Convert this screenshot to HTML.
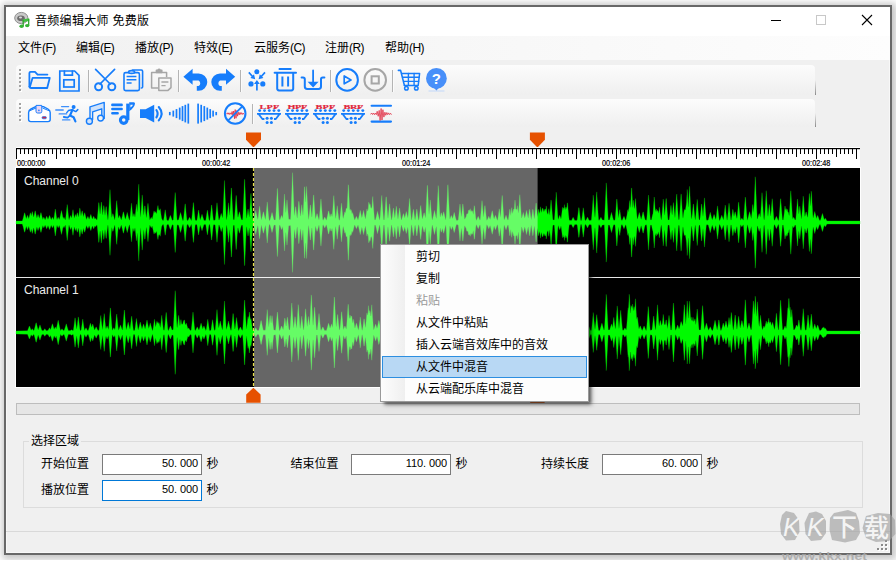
<!DOCTYPE html>
<html lang="zh-CN"><head><meta charset="utf-8"><title>音频编辑大师 免费版</title>
<style>
html,body{margin:0;padding:0}
body{width:896px;height:563px;background:#fff;position:relative;overflow:hidden;font-family:"Liberation Sans","Noto Sans CJK SC",sans-serif;font-size:12px;color:#000}
.abs{position:absolute}
#win{left:4px;top:5px;width:888px;height:550px;box-sizing:border-box;border:2px solid #686868;background:#f0f0f0;box-shadow:2px 2px 7px 3px rgba(0,0,0,.15),0 0 7px 3px rgba(0,0,0,.09),inset 0 0 0 1px #f8f8f8}
#title{left:6px;top:7px;width:884px;height:29px;background:#fff}
#ttext{left:35px;top:12px;line-height:18px;font-size:12px;white-space:nowrap;letter-spacing:.3px}
#menubar{left:6px;top:36px;width:884px;height:24px;background:linear-gradient(90deg,#f1f1f1,#fdfdfd)}
.mi{top:39px;line-height:19px;white-space:nowrap}
.mi span{letter-spacing:-0.6px}
.tb{left:16px;width:799px;border-radius:4px;background:linear-gradient(#fcfcfc,#efefef)}
.cjk{font-family:"Liberation Sans","Noto Sans CJK SC",sans-serif}
.song{font-family:"Liberation Sans","Noto Sans CJK SC",sans-serif;font-weight:400}
#menu{left:380px;top:244px;width:209px;height:158px;box-sizing:border-box;border:1px solid #9a9a9a;background:#fdfdfd;box-shadow:3px 3px 3px -1px rgba(0,0,0,.5),4px 4px 5px -1px rgba(0,0,0,.25)}
#menu .gut{left:0;top:0;width:24px;height:156px;background:linear-gradient(90deg,#fdfdfd,#efefef)}
#menu .it{left:35px;line-height:22px;height:22px;white-space:nowrap}
#menu .hl{left:1px;top:111px;width:205px;height:22px;box-sizing:border-box;background:#b8d8f4;border:1px solid #2c8ee0}
.lbl{line-height:14px;white-space:nowrap}
.inp{width:100px;height:21px;box-sizing:border-box;border:1px solid #7a7a7a;background:#fff}
.inp span{position:absolute;right:3px;top:1px;line-height:14px;font-family:"Liberation Sans",sans-serif;font-size:11px;letter-spacing:-0.1px}
.inp i{display:inline-block;width:3px}
</style></head><body>
<div id="win" class="abs"></div>
<div class="abs" style="left:0;top:560px;width:896px;height:3px;background:#fff"></div>
<div id="title" class="abs"></div>
<div id="ttext" class="abs">音频编辑大师 免费版</div>
<div id="menubar" class="abs"></div>
<div class="abs mi" style="left:18px">文件<span>(F)</span></div>
<div class="abs mi" style="left:76px">编辑<span>(E)</span></div>
<div class="abs mi" style="left:135px">播放<span>(P)</span></div>
<div class="abs mi" style="left:194px">特效<span>(E)</span></div>
<div class="abs mi" style="left:254px">云服务<span>(C)</span></div>
<div class="abs mi" style="left:325px">注册<span>(R)</span></div>
<div class="abs mi" style="left:385px">帮助<span>(H)</span></div>
<div class="abs tb" style="top:65px;height:30px"></div>
<div class="abs tb" style="top:99px;height:28px"></div>
<div class="abs" style="left:815px;top:80px;width:1px;height:15px;background:linear-gradient(rgba(120,120,120,0),#8a8a8a)"></div>
<div class="abs" style="left:815px;top:113px;width:1px;height:14px;background:linear-gradient(rgba(120,120,120,0),#8a8a8a)"></div>
<svg class="abs" style="left:0;top:0" width="896" height="563" viewBox="0 0 896 563">
<g>
<ellipse cx="21.3" cy="18" rx="6.6" ry="5.6" fill="#c9c9c9" stroke="#8f8f8f" stroke-width="1"/>
<ellipse cx="21" cy="18.2" rx="3.8" ry="2.8" fill="#6c6c6c"/>
<ellipse cx="20.5" cy="17.5" rx="1.6" ry="1.1" fill="#d8d8d8"/>
<path d="M22.6 19.6 L29.2 18.3 L29.2 21 L22.6 22.3 Z" fill="#3fbf3f"/>
<path d="M23.2 20 V26 M28.7 19 V25.2" stroke="#2fa52f" stroke-width="1.3" fill="none"/>
<ellipse cx="21.6" cy="26.2" rx="2.2" ry="1.7" fill="#35b335"/>
<ellipse cx="27.2" cy="25.6" rx="2.2" ry="1.7" fill="#35b335"/>
</g>
<path d="M771 20.5 H781" stroke="#000" stroke-width="1"/>
<rect x="816.5" y="15.5" width="9" height="9" fill="none" stroke="#c8c8c8" stroke-width="1"/>
<path d="M862 15 L872 25 M872 15 L862 25" stroke="#000" stroke-width="1.1" fill="none"/>
<rect x="20" y="70" width="2" height="2" fill="#fff"/><rect x="19" y="69" width="2" height="2" fill="#a3a3a3"/><rect x="20" y="74" width="2" height="2" fill="#fff"/><rect x="19" y="73" width="2" height="2" fill="#a3a3a3"/><rect x="20" y="78" width="2" height="2" fill="#fff"/><rect x="19" y="77" width="2" height="2" fill="#a3a3a3"/><rect x="20" y="82" width="2" height="2" fill="#fff"/><rect x="19" y="81" width="2" height="2" fill="#a3a3a3"/><rect x="20" y="86" width="2" height="2" fill="#fff"/><rect x="19" y="85" width="2" height="2" fill="#a3a3a3"/><rect x="20" y="90" width="2" height="2" fill="#fff"/><rect x="19" y="89" width="2" height="2" fill="#a3a3a3"/>
<rect x="20" y="104" width="2" height="2" fill="#fff"/><rect x="19" y="103" width="2" height="2" fill="#a3a3a3"/><rect x="20" y="108" width="2" height="2" fill="#fff"/><rect x="19" y="107" width="2" height="2" fill="#a3a3a3"/><rect x="20" y="112" width="2" height="2" fill="#fff"/><rect x="19" y="111" width="2" height="2" fill="#a3a3a3"/><rect x="20" y="116" width="2" height="2" fill="#fff"/><rect x="19" y="115" width="2" height="2" fill="#a3a3a3"/><rect x="20" y="120" width="2" height="2" fill="#fff"/><rect x="19" y="119" width="2" height="2" fill="#a3a3a3"/>
<rect x="88" y="70" width="1" height="22" fill="#b4b4b4"/><rect x="89" y="70" width="1" height="22" fill="#fbfbfb"/>
<rect x="178" y="70" width="1" height="22" fill="#b4b4b4"/><rect x="179" y="70" width="1" height="22" fill="#fbfbfb"/>
<rect x="240" y="70" width="1" height="22" fill="#b4b4b4"/><rect x="241" y="70" width="1" height="22" fill="#fbfbfb"/>
<rect x="330" y="70" width="1" height="22" fill="#b4b4b4"/><rect x="331" y="70" width="1" height="22" fill="#fbfbfb"/>
<rect x="392" y="70" width="1" height="22" fill="#b4b4b4"/><rect x="393" y="70" width="1" height="22" fill="#fbfbfb"/>
<rect x="252" y="104" width="1" height="20" fill="#b4b4b4"/><rect x="253" y="104" width="1" height="20" fill="#fbfbfb"/>
<g fill="none" stroke="#167dfb" stroke-width="1.6" stroke-linejoin="round" stroke-linecap="round">
<!-- open folder -->
<path d="M29.4 86.6 V73 Q29.4 71.8 30.6 71.8 H35 L37.6 74.6 H47.4" stroke-width="1.8"/>
<path d="M29.4 86.6 Q29.4 88 30.8 88 H47.2 L49.8 77.8 H32.6 L29.8 87.2" stroke-width="1.8"/>
<!-- save -->
<path d="M59.8 71 H74.6 L79 75.4 V91 H59.8 Z" stroke-width="1.7" stroke-linejoin="miter"/>
<path d="M64.4 71 V75.2 H72.4 V71" stroke-width="1.7" stroke-linejoin="miter"/>
<rect x="63.8" y="79.8" width="10.4" height="7.2" stroke-width="1.7" stroke-linejoin="miter"/>
<!-- scissors -->
<path d="M95.6 69.4 L110.2 84 M114.6 69.4 L100 84" stroke-width="1.7"/>
<circle cx="98.6" cy="86.8" r="3.5" stroke-width="2"/>
<circle cx="111.8" cy="86.8" r="3.5" stroke-width="2"/>
<!-- copy -->
<rect x="124" y="72.6" width="15.4" height="18" rx="1.6"/>
<path d="M132.5 70 H141.4 Q142.6 70 142.6 71.2 V87 Q142.6 88 141.4 88" />
<ellipse cx="131.6" cy="72" rx="3" ry="1.4" fill="#f6f6f6"/>
<path d="M126.6 76.6 H136.4 M126.6 79.8 H136.4 M126.6 82.9 H131.6" stroke-width="1.5" stroke-linecap="butt"/>
</g>
<g fill="none" stroke="#a6a6a6" stroke-width="1.5" stroke-linejoin="round">
<!-- paste (disabled) -->
<path d="M158 88 H151.6 V72.6 H166.6 V77"/>
<path d="M156.4 72.4 V70.2 H157.8 Q159 68.2 160.4 70.2 H161.8 V72.4 Z" fill="#a6a6a6"/>
<path d="M158.8 78 H171 V87.6 L168 90.4 H158.8 Z"/>
<path d="M161.4 82 H168.4 M161.4 85.6 H165.6" stroke-width="1.4"/>
<!-- stop -->
<circle cx="375.2" cy="79.9" r="10.8" stroke-width="2"/>
<rect x="371.6" y="76.3" width="7.2" height="7.2" stroke-width="2" stroke-linejoin="miter"/>
</g>
<!-- undo / redo -->
<g id="undo" fill="#167dfb" stroke="none">
<path d="M183.4 76.8 L192.6 68.8 V73.4 H198.6 A8.7 8.7 0 0 1 198.6 90.8 H196.8 V86 H198.6 A3.2 3.2 0 0 0 198.6 80.4 H192.6 V84.8 Z"/>
</g>
<g fill="#167dfb" stroke="none" transform="translate(418.6 0) scale(-1 1)">
<path d="M183.4 76.8 L192.6 68.8 V73.4 H198.6 A8.7 8.7 0 0 1 198.6 90.8 H196.8 V86 H198.6 A3.2 3.2 0 0 0 198.6 80.4 H192.6 V84.8 Z"/>
</g>
<!-- merge -->
<g fill="#167dfb" stroke="#167dfb">
<circle cx="256.8" cy="71.8" r="2.5" stroke="none"/>
<circle cx="251" cy="83.9" r="2.6" stroke="none"/>
<circle cx="262.8" cy="83.9" r="2.6" stroke="none"/>
<path d="M248.8 72.4 L253.2 77.2 M265 72.4 L260.6 77.2 M256.9 90.4 V83" stroke-width="1.7" fill="none"/>
<path d="M255.2 79.2 L250.4 78 L254 74.2 Z M258.6 79.2 L263.4 78 L259.8 74.2 Z M256.9 80 L254 84 H259.8 Z" stroke="none"/>
</g>
<!-- trash -->
<g fill="none" stroke="#167dfb" stroke-width="2" stroke-linecap="round" stroke-linejoin="round">
<path d="M279.4 69 H290.8" stroke-width="1.8"/>
<path d="M274.6 72.8 H296"/>
<path d="M277.2 73 V88.6 Q277.2 90.4 279 90.4 H291.4 Q293.2 90.4 293.2 88.6 V73"/>
<path d="M282.4 76.6 V86.6 M288.1 76.6 V86.6" stroke-linecap="butt"/>
<!-- insert -->
<path d="M313.1 70.4 V85" stroke-width="1.8"/>
<path d="M301.6 77.5 H303 Q304.8 77.5 304.8 79.3 V86.6 Q304.8 89 307.2 89 H318.6 Q321 89 321 86.6 V79.3 Q321 77.5 322.8 77.5 H324.4"/>
</g>
<path d="M307.6 81.8 H318.6 L313.1 87.6 Z" fill="#167dfb"/>
<!-- play -->
<g fill="none" stroke="#167dfb" stroke-linejoin="round">
<circle cx="347.1" cy="79.9" r="10.8" stroke-width="2"/>
<path d="M344.2 76 V83.8 L351 79.9 Z" stroke-width="1.7"/>
</g>
<!-- cart -->
<g fill="none" stroke="#167dfb" stroke-width="1.5" stroke-linejoin="round" stroke-linecap="round">
<path d="M398.4 70.4 H400.6 L404.4 85.4" stroke-width="1.6"/>
<path d="M401.6 73.5 H419.6 L418.2 85.4 H404.4"/>
<path d="M402.6 77.2 H419.1 M403.6 81.4 H418.6 M408.4 73.5 V85.4 M414.1 73.5 V85.4" stroke-width="1.4"/>
<circle cx="406.4" cy="88.3" r="1.8"/>
<circle cx="416.3" cy="88.3" r="1.8"/>
</g>
<!-- help -->
<path d="M428.5 91 H444.5" stroke="#c9dcf8" stroke-width="1.2"/>
<circle cx="436.4" cy="78.4" r="10.4" fill="#478ff9"/>
<path d="M434 88 L436.4 90.6 L438.8 88 Z" fill="#478ff9"/>
<text x="436.4" y="83.6" text-anchor="middle" font-family="Liberation Sans, sans-serif" font-weight="bold" font-size="15" fill="#fff">?</text>
<!-- toolbar 2 -->
<g fill="#fff" stroke="#167dfb" stroke-width="1.4" stroke-linejoin="round">
<path d="M28.6 112.4 Q28.6 110.2 31 109 L35.6 106.6 H43.4 L48 109 Q50.2 110.2 50.2 112.4 V119.6 Q50.2 121.6 48 121.6 H30.8 Q28.6 121.6 28.6 119.6 Z"/>
<path d="M29.2 111 L36 108 M49.6 111 L42.6 108" stroke-width="1"/>
<path d="M36 105.4 H41.8 V111.4 Q41.8 113 40.2 113 H37.6 Q36 113 36 111.4 Z" fill="#ecd6f2" stroke-width="1"/>
<circle cx="38.9" cy="110.4" r="0.8" fill="#167dfb" stroke="none"/>
<rect x="42" y="116.6" width="4.4" height="2.2" rx="1.1" fill="#d8203c" stroke-width="0.7"/>
</g>
<!-- runner -->
<g fill="none" stroke="#167dfb" stroke-width="1.2" stroke-linecap="round" stroke-linejoin="round">
<path d="M61.6 106.6 H68.6 M55.8 110 H63.2 M59.2 113.9 H66.6 M62.6 119.9 H69.8" stroke="#3f90fb" stroke-width="1.4"/>
<path d="M66.8 112.6 L68.4 110.6 L72 109.8 L75.8 111.6 L77.8 109.6" stroke-width="1.5"/>
<path d="M72.4 109.8 L70 115.6 L73.6 117.2 L75.4 121.4" stroke-width="2.2"/>
<path d="M70 115.4 L67.6 117.6 L63.8 117" stroke-width="1.8"/>
</g>
<circle cx="73.6" cy="107" r="2" fill="#167dfb"/>
<!-- notes -->
<g fill="none" stroke="#167dfb" stroke-width="1.4" stroke-linejoin="round" stroke-linecap="round">
<path d="M90.7 107.2 L103.6 103.2 V108.2 L90.7 112.4 Z" fill="#cfe2fb" stroke="none"/>
<path d="M90 118.4 V106.8 L104.2 102.4 V118.6"/>
<path d="M92.6 119.4 V111.9 L101.8 108.8 V115.4"/>
<circle cx="89.4" cy="121.3" r="3" fill="#cfe2fb"/>
<circle cx="100.6" cy="118.1" r="2.9" fill="#f3f3f3"/>
</g>
<!-- playlist note -->
<g fill="none" stroke="#167dfb" stroke-linecap="round">
<path d="M112.4 104.9 H121.6 M112.4 109 H121.6 M112.4 113.2 H117.6" stroke-width="2.6"/>
<path d="M127.8 103.6 V120" stroke-width="3.2" stroke-linecap="butt"/>
<circle cx="123.7" cy="120.1" r="3.3" stroke-width="3.1"/>
</g>
<path d="M126.2 102.2 H133.8 Q135.2 102.2 135 103.8 Q134.4 107.8 129.2 111.2 V102.2 Z M130.4 104.8 V107.6 Q132.4 106.6 133 104.8 Z" fill="#167dfb" fill-rule="evenodd"/>
<!-- speaker -->
<path d="M140 109.2 H145.6 L154.2 104.8 V122.4 L145.6 118 H140 Z" fill="#167dfb"/>
<g fill="none" stroke="#167dfb" stroke-width="2.1" stroke-linecap="round">
<path d="M156.4 110 Q158.8 113.6 156.4 117.4"/>
<path d="M158.8 107 Q164.4 113.6 158.8 120.4"/>
</g>
<rect x="168.95" y="111.95" width="1.7" height="3.3" fill="#167dfb"/><rect x="172.45" y="110.60" width="1.7" height="6" fill="#167dfb"/><rect x="175.65" y="109.10" width="1.7" height="9" fill="#167dfb"/><rect x="178.85" y="107.60" width="1.7" height="12" fill="#167dfb"/><rect x="181.65" y="106.10" width="1.7" height="15" fill="#167dfb"/><rect x="184.45" y="104.80" width="1.7" height="17.6" fill="#167dfb"/><rect x="187.45" y="103.60" width="1.7" height="20" fill="#167dfb"/><rect x="197.25" y="103.60" width="1.7" height="20" fill="#167dfb"/><rect x="200.35" y="104.80" width="1.7" height="17.6" fill="#167dfb"/><rect x="203.45" y="106.10" width="1.7" height="15" fill="#167dfb"/><rect x="206.45" y="107.60" width="1.7" height="12" fill="#167dfb"/><rect x="209.35" y="109.10" width="1.7" height="9" fill="#167dfb"/><rect x="212.25" y="110.60" width="1.7" height="6" fill="#167dfb"/><rect x="215.35" y="111.95" width="1.7" height="3.3" fill="#167dfb"/>
<!-- no-noise -->
<polyline points="226.5,114.2 227.3,112.8 228.1,114.3 228.9,112.8 229.7,114.5 230.5,112.9 231.3,114.4 232.1,111.5 232.9,115.6 233.7,111.0 234.5,118.7 235.2,109.6 236.0,118.3 236.8,110.5 237.6,116.2 238.4,112.3 239.2,114.9 240.0,112.4 240.8,114.4 241.6,112.7 242.4,114.4 243.2,113.1 244.0,114.5" fill="none" stroke="#e0263c" stroke-width="0.8" stroke-linejoin="round"/>
<circle cx="235.2" cy="113.5" r="10.3" fill="none" stroke="#167dfb" stroke-width="2"/>
<path d="M227.8 120.8 L242.6 106.2" stroke="#167dfb" stroke-width="1.8"/>
<g fill="#167dfb" stroke="none"><circle cx="259.7" cy="110.6" r="1.45"/><circle cx="264.5" cy="110.6" r="1.45"/><circle cx="269.3" cy="110.6" r="1.45"/><circle cx="274.0" cy="110.6" r="1.45"/><circle cx="278.8" cy="110.6" r="1.45"/><circle cx="267.1" cy="118.2" r="1.5"/><circle cx="267.1" cy="122.4" r="1.5"/><circle cx="271.4" cy="118.2" r="1.5"/><circle cx="271.4" cy="122.4" r="1.5"/></g><path d="M257 113.8 H281 M258.6 114 L262.4 119 H264.4 M279.6 114 L275.8 119 H274" fill="none" stroke="#167dfb" stroke-width="1.8" stroke-linejoin="round"/><text transform="translate(259.5 108.7) scale(0.513 0.34)" x="0" y="0" font-family="Liberation Serif, serif" font-weight="bold" font-size="20" textLength="38.5" lengthAdjust="spacing" fill="#e0263c" stroke="#e0263c" stroke-width="0.5">LPF</text>
<g fill="#167dfb" stroke="none"><circle cx="287.7" cy="110.6" r="1.45"/><circle cx="292.5" cy="110.6" r="1.45"/><circle cx="297.3" cy="110.6" r="1.45"/><circle cx="302.0" cy="110.6" r="1.45"/><circle cx="306.8" cy="110.6" r="1.45"/><circle cx="295.1" cy="118.2" r="1.5"/><circle cx="295.1" cy="122.4" r="1.5"/><circle cx="299.4" cy="118.2" r="1.5"/><circle cx="299.4" cy="122.4" r="1.5"/></g><path d="M285 113.8 H309 M286.6 114 L290.4 119 H292.4 M307.6 114 L303.8 119 H302" fill="none" stroke="#167dfb" stroke-width="1.8" stroke-linejoin="round"/><text transform="translate(287.5 108.7) scale(0.513 0.34)" x="0" y="0" font-family="Liberation Serif, serif" font-weight="bold" font-size="20" textLength="38.5" lengthAdjust="spacing" fill="#e0263c" stroke="#e0263c" stroke-width="0.5">HPF</text>
<g fill="#167dfb" stroke="none"><circle cx="315.7" cy="110.6" r="1.45"/><circle cx="320.5" cy="110.6" r="1.45"/><circle cx="325.3" cy="110.6" r="1.45"/><circle cx="330.0" cy="110.6" r="1.45"/><circle cx="334.8" cy="110.6" r="1.45"/><circle cx="323.1" cy="118.2" r="1.5"/><circle cx="323.1" cy="122.4" r="1.5"/><circle cx="327.4" cy="118.2" r="1.5"/><circle cx="327.4" cy="122.4" r="1.5"/></g><path d="M313 113.8 H337 M314.6 114 L318.4 119 H320.4 M335.6 114 L331.8 119 H330" fill="none" stroke="#167dfb" stroke-width="1.8" stroke-linejoin="round"/><text transform="translate(315.5 108.7) scale(0.513 0.34)" x="0" y="0" font-family="Liberation Serif, serif" font-weight="bold" font-size="20" textLength="38.5" lengthAdjust="spacing" fill="#e0263c" stroke="#e0263c" stroke-width="0.5">BPF</text>
<g fill="#167dfb" stroke="none"><circle cx="343.7" cy="110.6" r="1.45"/><circle cx="348.5" cy="110.6" r="1.45"/><circle cx="353.3" cy="110.6" r="1.45"/><circle cx="358.0" cy="110.6" r="1.45"/><circle cx="362.8" cy="110.6" r="1.45"/><circle cx="351.1" cy="118.2" r="1.5"/><circle cx="351.1" cy="122.4" r="1.5"/><circle cx="355.4" cy="118.2" r="1.5"/><circle cx="355.4" cy="122.4" r="1.5"/></g><path d="M341 113.8 H365 M342.6 114 L346.4 119 H348.4 M363.6 114 L359.8 119 H358" fill="none" stroke="#167dfb" stroke-width="1.8" stroke-linejoin="round"/><text transform="translate(343.5 108.7) scale(0.513 0.34)" x="0" y="0" font-family="Liberation Serif, serif" font-weight="bold" font-size="20" textLength="38.5" lengthAdjust="spacing" fill="#e0263c" stroke="#e0263c" stroke-width="0.5">BRF</text>
<path d="M371.6 105.7 H391 M371.6 121.6 H391" stroke="#167dfb" stroke-width="2.1" stroke-linecap="round"/>
<g opacity="0.85"><polyline points="370.6,114.4 371.6,113.0 372.5,114.5 373.5,113.0 374.4,114.7 375.4,113.1 376.3,114.7 377.2,111.3 378.2,116.3 379.2,110.4 380.1,120.5 381.1,108.5 382.0,120.0 382.9,109.7 383.9,117.1 384.9,112.2 385.8,115.3 386.8,112.5 387.7,114.7 388.6,112.9 389.6,114.6 390.6,113.3 391.5,114.7" fill="none" stroke="#e0263c" stroke-width="0.9" stroke-linejoin="round"/></g>
<path d="M246.0 132.6 H261.0 V139.8 L253.5 147.4 L246.0 139.8 Z" fill="#e65100"/>
<path d="M529.9 132.6 H544.9 V139.8 L537.4 147.4 L529.9 139.8 Z" fill="#e65100"/>
<path d="M253.4 387.8 L260.6 394.6 V402.8 H246.2 V394.6 Z" fill="#e65100"/>
<path d="M537.4 387.8 L544.6 394.6 V402.8 H530.2 V394.6 Z" fill="#e65100"/>
<rect x="16" y="147" width="844" height="21" fill="#fff"/>
<rect x="16" y="148" width="844" height="1.2" fill="#000"/>
<path d="M16.5 148 v11 M20.5 148 v6 M24.5 148 v6 M28.5 148 v6 M32.5 148 v6 M36.5 148 v9 M40.5 148 v6 M44.5 148 v6 M48.5 148 v6 M52.5 148 v6 M56.5 148 v11 M60.5 148 v6 M64.5 148 v6 M68.5 148 v6 M72.5 148 v6 M76.5 148 v9 M80.5 148 v6 M84.5 148 v6 M88.5 148 v6 M92.5 148 v6 M96.5 148 v11 M100.5 148 v6 M104.5 148 v6 M108.5 148 v6 M112.5 148 v6 M116.5 148 v9 M120.5 148 v6 M124.5 148 v6 M128.5 148 v6 M132.5 148 v6 M136.5 148 v11 M140.5 148 v6 M144.5 148 v6 M148.5 148 v6 M152.5 148 v6 M156.5 148 v9 M160.5 148 v6 M164.5 148 v6 M168.5 148 v6 M172.5 148 v6 M176.5 148 v11 M180.5 148 v6 M184.5 148 v6 M188.5 148 v6 M192.5 148 v6 M196.5 148 v9 M200.5 148 v6 M204.5 148 v6 M208.5 148 v6 M212.5 148 v6 M216.5 148 v11 M220.5 148 v6 M224.5 148 v6 M228.5 148 v6 M232.5 148 v6 M236.5 148 v9 M240.5 148 v6 M244.5 148 v6 M248.5 148 v6 M252.5 148 v6 M256.5 148 v11 M260.5 148 v6 M264.5 148 v6 M268.5 148 v6 M272.5 148 v6 M276.5 148 v9 M280.5 148 v6 M284.5 148 v6 M288.5 148 v6 M292.5 148 v6 M296.5 148 v11 M300.5 148 v6 M304.5 148 v6 M308.5 148 v6 M312.5 148 v6 M316.5 148 v9 M320.5 148 v6 M324.5 148 v6 M328.5 148 v6 M332.5 148 v6 M336.5 148 v11 M340.5 148 v6 M344.5 148 v6 M348.5 148 v6 M352.5 148 v6 M356.5 148 v9 M360.5 148 v6 M364.5 148 v6 M368.5 148 v6 M372.5 148 v6 M376.5 148 v11 M380.5 148 v6 M384.5 148 v6 M388.5 148 v6 M392.5 148 v6 M396.5 148 v9 M400.5 148 v6 M404.5 148 v6 M408.5 148 v6 M412.5 148 v6 M416.5 148 v11 M420.5 148 v6 M424.5 148 v6 M428.5 148 v6 M432.5 148 v6 M436.5 148 v9 M440.5 148 v6 M444.5 148 v6 M448.5 148 v6 M452.5 148 v6 M456.5 148 v11 M460.5 148 v6 M464.5 148 v6 M468.5 148 v6 M472.5 148 v6 M476.5 148 v9 M480.5 148 v6 M484.5 148 v6 M488.5 148 v6 M492.5 148 v6 M496.5 148 v11 M500.5 148 v6 M504.5 148 v6 M508.5 148 v6 M512.5 148 v6 M516.5 148 v9 M520.5 148 v6 M524.5 148 v6 M528.5 148 v6 M532.5 148 v6 M536.5 148 v11 M540.5 148 v6 M544.5 148 v6 M548.5 148 v6 M552.5 148 v6 M556.5 148 v9 M560.5 148 v6 M564.5 148 v6 M568.5 148 v6 M572.5 148 v6 M576.5 148 v11 M580.5 148 v6 M584.5 148 v6 M588.5 148 v6 M592.5 148 v6 M596.5 148 v9 M600.5 148 v6 M604.5 148 v6 M608.5 148 v6 M612.5 148 v6 M616.5 148 v11 M620.5 148 v6 M624.5 148 v6 M628.5 148 v6 M632.5 148 v6 M636.5 148 v9 M640.5 148 v6 M644.5 148 v6 M648.5 148 v6 M652.5 148 v6 M656.5 148 v11 M660.5 148 v6 M664.5 148 v6 M668.5 148 v6 M672.5 148 v6 M676.5 148 v9 M680.5 148 v6 M684.5 148 v6 M688.5 148 v6 M692.5 148 v6 M696.5 148 v11 M700.5 148 v6 M704.5 148 v6 M708.5 148 v6 M712.5 148 v6 M716.5 148 v9 M720.5 148 v6 M724.5 148 v6 M728.5 148 v6 M732.5 148 v6 M736.5 148 v11 M740.5 148 v6 M744.5 148 v6 M748.5 148 v6 M752.5 148 v6 M756.5 148 v9 M760.5 148 v6 M764.5 148 v6 M768.5 148 v6 M772.5 148 v6 M776.5 148 v11 M780.5 148 v6 M784.5 148 v6 M788.5 148 v6 M792.5 148 v6 M796.5 148 v9 M800.5 148 v6 M804.5 148 v6 M808.5 148 v6 M812.5 148 v6 M816.5 148 v11 M820.5 148 v6 M824.5 148 v6 M828.5 148 v6 M832.5 148 v6 M836.5 148 v9 M840.5 148 v6 M844.5 148 v6 M848.5 148 v6 M852.5 148 v6 M856.5 148 v11 " stroke="#000" stroke-width="1" fill="none"/>
<text x="17" y="166.4" text-anchor="start" font-family="Liberation Sans, sans-serif" font-size="9" textLength="28.4" lengthAdjust="spacingAndGlyphs" fill="#000" stroke="#000" stroke-width="0.2">00:00:00</text>
<text x="216.2" y="166.4" text-anchor="middle" font-family="Liberation Sans, sans-serif" font-size="9" textLength="28.4" lengthAdjust="spacingAndGlyphs" fill="#000" stroke="#000" stroke-width="0.2">00:00:42</text>
<text x="416.2" y="166.4" text-anchor="middle" font-family="Liberation Sans, sans-serif" font-size="9" textLength="28.4" lengthAdjust="spacingAndGlyphs" fill="#000" stroke="#000" stroke-width="0.2">00:01:24</text>
<text x="616.2" y="166.4" text-anchor="middle" font-family="Liberation Sans, sans-serif" font-size="9" textLength="28.4" lengthAdjust="spacingAndGlyphs" fill="#000" stroke="#000" stroke-width="0.2">00:02:06</text>
<text x="816.2" y="166.4" text-anchor="middle" font-family="Liberation Sans, sans-serif" font-size="9" textLength="28.4" lengthAdjust="spacingAndGlyphs" fill="#000" stroke="#000" stroke-width="0.2">00:02:48</text>
<rect x="15" y="167" width="846" height="221" fill="#fff"/>
<rect x="16" y="168" width="844" height="219" fill="#000"/>
<g fill="#00fb00" stroke="#00c800" stroke-width="0.5" stroke-opacity="0.6">
<polygon points="16.00,221.0 22.25,221.0 23.00,218.7 24.25,213.9 24.50,212.9 24.75,212.8 26.00,217.8 26.25,218.7 26.75,217.5 27.50,215.2 28.75,218.7 30.00,213.9 30.25,212.9 30.50,212.8 31.25,215.9 31.75,213.9 32.25,211.6 32.50,212.3 33.50,216.7 33.75,217.2 34.75,212.6 35.00,211.3 35.25,210.8 36.50,216.7 36.75,217.8 37.00,217.7 38.00,214.4 38.25,214.9 39.25,218.2 39.50,218.0 40.75,213.1 41.00,212.6 42.25,217.6 42.75,219.4 43.75,217.2 44.00,217.5 45.00,219.7 45.25,219.7 46.50,216.6 46.75,216.3 48.00,219.4 48.50,218.3 49.50,215.4 49.75,215.8 51.00,219.3 51.25,219.7 52.25,217.5 52.50,217.2 53.50,219.4 53.75,219.5 54.50,214.7 55.25,209.0 55.50,209.9 56.25,215.5 56.75,218.7 57.00,219.7 58.00,217.5 58.25,217.2 59.25,219.4 59.50,219.3 60.50,215.1 61.25,211.4 61.50,210.6 62.75,216.6 63.25,218.7 63.75,217.6 64.00,217.2 65.25,219.9 65.50,219.6 66.00,215.7 66.50,211.2 67.00,206.3 67.25,204.5 68.00,212.0 68.50,216.4 68.75,218.4 69.00,219.9 70.50,215.7 70.75,215.5 71.50,217.7 71.75,217.7 72.50,212.8 72.75,211.0 73.00,209.7 73.75,215.0 74.25,218.2 75.25,214.9 75.50,214.4 76.25,216.9 77.25,212.8 77.50,212.9 78.50,216.9 78.75,216.2 79.50,210.3 79.75,208.2 80.00,208.3 80.75,214.5 81.00,216.0 82.00,211.3 82.25,210.8 83.50,216.8 83.75,216.1 84.50,213.0 84.75,212.7 86.00,217.7 86.50,219.4 86.75,219.1 87.75,216.6 88.00,216.4 89.00,218.9 89.25,219.2 90.50,215.3 90.75,214.4 91.00,214.9 92.25,218.9 92.50,219.1 93.50,216.6 93.75,216.3 94.75,218.9 95.00,219.2 95.50,218.2 95.75,218.4 96.75,220.1 97.00,220.2 97.25,218.3 97.75,213.7 98.25,208.4 98.75,202.6 99.00,203.1 99.50,208.9 100.00,214.1 100.25,213.4 100.75,208.0 101.25,202.0 101.50,202.7 102.00,208.6 102.50,214.0 102.75,215.0 103.50,208.1 103.75,205.6 104.00,206.3 104.75,213.4 105.00,215.5 105.25,213.7 106.00,207.0 106.25,206.6 107.00,213.4 107.50,217.4 107.75,219.2 108.00,219.9 108.25,217.5 108.50,214.2 108.75,210.6 109.25,202.5 109.75,193.6 110.00,189.7 110.50,198.9 111.00,207.4 111.25,211.3 111.50,214.8 111.75,217.4 112.75,213.7 113.00,213.8 114.25,218.3 114.75,219.9 115.00,218.8 115.50,214.0 116.00,208.4 116.50,202.3 116.75,200.6 117.25,206.9 117.75,212.6 118.25,217.6 118.50,218.3 119.50,215.4 119.75,215.8 121.25,219.9 121.50,219.4 122.50,215.4 123.25,212.1 123.50,211.8 124.75,217.3 125.25,219.2 125.50,219.1 126.75,214.4 127.25,212.4 128.50,217.4 129.25,220.0 129.50,220.3 129.75,219.4 130.25,215.2 130.75,210.4 131.25,205.1 131.50,203.2 132.25,211.2 132.75,216.0 133.00,216.8 133.75,214.1 134.00,213.5 135.00,217.2 135.25,215.5 135.75,210.9 136.25,205.8 136.50,204.3 137.25,211.9 137.50,209.1 137.75,204.6 138.00,199.8 138.50,189.5 138.75,184.2 139.25,194.9 139.50,199.9 139.75,204.7 140.00,209.2 140.25,213.4 140.50,217.1 140.75,215.1 141.25,208.6 141.75,201.2 142.00,197.3 142.25,194.9 142.75,202.8 143.25,210.0 143.50,213.3 143.75,215.3 144.50,208.5 144.75,206.0 145.00,205.8 145.75,213.0 146.25,217.2 146.50,217.4 147.00,212.8 147.75,205.0 148.00,203.3 148.75,211.3 149.25,216.0 149.75,220.0 150.50,218.7 151.25,217.2 152.00,218.8 152.25,218.9 153.25,214.5 154.00,210.9 154.25,211.2 154.50,212.5 154.75,212.9 155.00,212.1 155.25,211.7 155.50,211.9 156.25,213.5 156.50,213.5 156.75,212.6 157.25,209.2 157.75,206.4 158.00,205.5 158.25,207.8 158.75,209.9 159.00,210.5 159.25,210.5 159.75,209.7 160.00,209.5 160.25,208.7 161.00,214.4 161.50,217.8 161.75,218.7 162.50,220.3 163.50,220.4 164.00,217.7 164.75,212.8 165.00,211.0 165.25,209.8 166.00,215.1 166.75,219.6 167.00,220.6 168.25,220.6 168.50,220.4 169.75,217.1 170.25,215.6 170.50,215.5 172.00,219.8 172.25,220.3 173.00,220.3 173.25,220.0 173.50,217.2 173.75,214.1 174.00,210.6 174.50,202.9 175.00,194.4 175.25,192.5 175.75,201.1 176.25,209.0 176.50,212.6 176.75,215.9 177.00,218.9 177.25,220.2 178.50,220.1 179.50,216.6 180.50,212.5 180.75,213.2 182.00,218.1 182.50,219.8 182.75,220.4 183.25,220.4 183.50,219.0 184.00,214.7 184.50,209.8 185.00,204.4 185.25,203.8 186.00,211.8 186.50,216.5 187.00,220.4 188.00,220.4 189.50,217.3 189.75,217.5 191.00,220.1 191.25,220.5 191.50,220.5 191.75,218.7 192.25,214.2 192.75,208.9 193.25,203.2 193.50,202.6 194.00,208.4 194.50,213.7 195.00,218.3 195.25,220.3 196.75,220.4 197.00,219.8 197.75,215.3 198.50,210.0 198.75,210.7 199.50,215.9 200.00,218.9 200.25,219.9 201.50,216.0 202.00,214.3 202.75,216.7 204.00,220.4 204.75,220.6 205.50,220.6 205.75,220.2 206.50,215.8 207.25,210.6 207.50,210.2 208.25,215.4 209.00,219.9 209.25,220.4 209.75,220.5 210.00,218.9 210.50,214.8 211.00,210.1 211.50,205.0 211.75,205.1 212.50,212.6 213.00,217.0 213.25,219.0 213.50,220.3 215.00,220.3 215.25,219.6 215.75,215.5 216.25,210.7 217.00,202.8 217.75,210.9 218.25,215.7 218.75,219.8 219.00,220.2 219.25,220.1 220.50,216.0 221.00,214.1 221.25,213.4 222.50,218.0 222.75,216.0 223.00,211.7 223.25,207.0 223.50,201.9 223.75,196.6 224.00,190.9 224.25,185.1 224.50,180.5 225.00,192.3 225.25,197.9 225.50,203.2 225.75,208.2 226.00,212.8 226.25,216.9 226.50,219.5 226.75,219.5 227.00,217.7 227.50,213.3 228.00,208.2 228.50,202.8 229.25,210.9 229.50,213.3 229.75,215.5 230.00,211.6 230.25,207.4 230.50,203.0 231.00,193.3 231.25,188.1 231.50,188.1 232.00,198.3 232.25,203.0 232.50,207.5 232.75,211.7 233.00,215.5 233.25,218.9 233.50,219.7 234.25,219.8 234.50,217.6 234.75,214.7 235.25,208.1 235.75,200.8 236.00,196.8 236.25,195.4 236.75,203.2 237.25,210.4 237.50,213.6 237.75,216.6 238.00,217.6 239.25,212.2 239.50,211.7 240.75,217.2 241.25,219.1 241.50,219.8 242.50,219.9 242.75,217.7 243.00,213.5 243.25,208.7 243.50,203.4 243.75,197.8 244.00,191.9 244.25,185.7 244.50,179.3 244.75,180.2 245.00,186.6 245.25,192.8 245.50,198.6 245.75,204.2 246.00,209.4 246.25,214.1 246.50,218.3 246.75,218.0 247.50,212.8 248.00,209.0 248.25,210.0 249.00,215.6 249.25,217.2 249.50,214.4 249.75,211.1 250.25,203.6 250.75,195.4 251.00,193.3 251.50,201.6 252.00,209.3 252.25,212.8 252.50,216.0 252.75,218.9 253.00,220.1 253.50,220.1 253.75,219.4 254.75,215.2 255.75,210.5 257.00,216.5 257.75,219.5 258.00,218.9 258.50,215.2 259.25,208.6 259.50,206.3 259.75,207.4 260.50,214.1 261.00,218.0 261.25,219.7 261.50,219.4 262.50,215.4 263.25,212.1 263.50,211.8 264.75,217.3 265.25,219.2 265.50,219.5 266.00,215.2 266.50,210.1 267.25,201.9 268.00,210.4 268.50,215.4 269.00,219.6 269.25,220.4 269.75,220.4 270.00,220.1 271.00,216.6 272.00,212.5 272.25,213.2 273.50,218.2 274.00,219.8 274.25,220.1 275.25,220.1 275.50,219.3 275.75,216.1 276.00,212.4 276.25,208.3 276.50,204.0 277.00,194.6 277.25,189.6 277.50,188.4 278.00,198.3 278.25,203.0 278.50,207.4 278.75,211.5 279.00,215.3 279.25,218.6 279.50,220.0 280.00,219.8 281.50,215.6 281.75,215.6 282.75,218.5 283.00,215.7 283.25,212.6 283.75,205.7 284.25,198.1 284.50,194.1 285.00,202.0 285.50,209.3 285.75,212.6 286.00,211.9 286.50,206.1 287.00,199.9 287.50,206.2 288.00,212.0 288.50,217.1 288.75,219.3 290.50,219.6 290.75,216.3 291.00,211.3 291.25,205.9 291.50,199.9 291.75,193.6 292.00,186.9 292.25,180.0 292.50,172.7 292.75,176.8 293.00,183.9 293.25,190.7 293.50,197.2 293.75,203.3 294.00,209.0 294.25,214.2 294.50,215.6 295.25,209.2 295.50,206.8 295.75,206.8 296.50,213.6 297.00,217.6 297.25,218.2 297.75,213.3 298.25,207.7 298.75,201.5 299.00,201.4 299.50,207.6 300.00,213.3 300.25,215.8 300.50,216.3 301.00,212.0 301.75,204.7 302.50,211.9 302.75,214.1 303.00,215.3 303.25,211.3 303.50,207.0 303.75,202.4 304.25,192.3 304.50,187.0 304.75,186.7 305.25,197.2 305.50,202.2 305.75,201.5 306.25,191.7 306.50,186.5 306.75,189.7 307.25,199.7 307.50,204.4 307.75,208.8 308.00,212.9 308.25,216.6 308.50,219.4 308.75,219.0 309.25,214.9 309.75,210.3 310.25,205.1 310.50,204.9 311.25,212.5 311.75,216.9 312.00,217.2 312.25,214.1 312.75,207.3 313.25,199.6 313.50,195.6 313.75,194.9 314.25,203.0 314.75,210.3 315.00,213.6 315.25,216.7 315.50,219.0 316.75,214.6 317.00,213.6 317.25,213.9 318.50,218.4 319.00,219.9 319.25,218.4 319.50,215.9 320.00,210.2 320.50,203.9 320.75,200.5 321.00,198.9 321.50,205.7 322.00,211.8 322.50,217.3 322.75,219.6 323.00,220.3 323.25,220.3 324.75,217.1 326.25,220.2 326.50,219.9 327.50,215.8 328.50,210.9 328.75,211.1 330.00,217.0 330.25,216.5 331.00,213.7 331.25,213.9 332.00,216.6 332.25,216.3 332.50,213.3 333.00,206.8 333.50,199.4 333.75,195.6 334.00,198.4 334.50,205.8 335.00,212.5 335.25,215.5 335.50,218.3 335.75,218.3 336.25,214.5 337.25,205.7 338.00,212.7 338.50,216.7 338.75,218.6 339.00,220.1 339.50,220.2 339.75,219.4 340.25,215.2 340.75,210.4 341.25,205.0 341.50,203.2 342.25,211.3 342.75,216.0 343.00,218.1 343.25,218.5 344.50,213.2 344.75,212.1 345.00,211.8 345.25,213.0 345.50,212.6 346.00,209.4 346.25,208.4 346.50,208.1 346.75,208.4 347.00,209.1 347.25,205.8 347.50,200.9 347.75,195.8 348.25,184.7 348.50,185.5 349.00,196.4 349.25,201.6 349.50,206.4 349.75,209.3 350.00,210.4 350.25,210.8 350.50,209.8 350.75,209.2 351.00,210.1 351.25,210.3 351.50,211.0 351.75,212.4 352.00,214.1 352.25,213.7 352.50,212.6 352.75,213.0 354.00,218.0 354.50,219.7 354.75,220.2 356.25,216.6 356.50,216.4 358.00,220.1 358.25,219.5 359.25,215.3 360.25,210.4 361.50,216.4 361.75,217.5 362.00,217.5 363.00,213.0 363.50,210.4 364.75,216.4 365.25,218.5 365.50,218.9 366.25,214.0 366.75,210.2 367.00,208.8 367.25,210.8 367.50,211.2 367.75,210.7 368.00,210.6 368.25,208.4 368.75,202.4 369.00,202.3 369.25,205.3 369.75,203.7 370.00,203.8 370.25,204.7 370.75,207.4 371.00,208.3 371.25,208.5 371.50,208.1 371.75,207.5 372.00,206.4 372.50,199.3 372.75,196.5 373.25,203.9 373.75,210.6 374.25,216.5 374.50,219.1 374.75,220.1 375.25,220.1 375.50,219.8 376.50,215.9 377.50,211.4 379.00,217.8 379.50,219.7 379.75,220.2 380.00,218.4 380.25,215.7 380.75,209.5 381.25,202.4 381.50,198.7 381.75,195.4 382.25,203.0 382.75,210.0 383.25,216.1 383.50,218.8 383.75,220.0 384.25,219.9 384.50,217.5 384.75,214.7 385.25,208.3 385.75,201.1 386.00,197.3 386.25,196.8 386.75,204.3 387.25,211.1 387.50,214.3 387.75,217.1 388.00,218.5 388.50,214.2 389.00,209.2 389.50,203.8 389.75,204.5 390.50,212.4 391.00,217.0 391.25,219.0 391.50,220.1 391.75,220.0 392.25,216.8 393.00,211.1 393.25,209.1 393.50,208.1 394.25,214.2 394.75,217.7 395.00,217.0 395.50,213.0 396.25,206.2 396.50,207.5 397.25,214.2 397.75,218.0 398.00,219.3 398.50,216.0 399.25,210.2 399.50,208.1 399.75,209.1 400.50,215.0 401.00,218.5 401.25,220.0 401.50,219.9 402.75,215.8 403.25,213.9 403.50,213.6 404.50,217.3 404.75,218.0 406.00,212.7 406.25,211.5 406.50,212.4 407.75,217.8 408.00,217.0 408.50,211.5 409.00,205.3 409.50,198.5 409.75,200.9 410.25,207.5 410.75,213.5 411.00,216.2 411.25,218.7 411.50,220.2 411.75,219.9 412.25,216.8 413.00,211.4 413.25,209.5 413.50,209.5 414.25,215.1 414.75,218.4 415.00,219.8 415.25,219.6 415.75,216.5 416.50,211.1 416.75,209.1 417.00,209.8 417.75,215.4 418.25,218.7 418.50,220.1 418.75,220.3 419.00,219.4 419.50,215.6 420.25,208.8 420.50,206.3 420.75,205.5 421.50,212.7 422.00,217.0 422.25,218.8 422.50,218.7 423.75,213.9 424.00,212.8 424.25,212.9 425.50,217.9 425.75,215.0 426.00,210.8 426.25,206.3 426.50,201.5 426.75,196.4 427.25,185.5 427.50,185.4 428.00,196.3 428.25,201.4 428.50,206.2 428.75,210.8 429.00,214.6 429.50,209.2 430.00,203.1 430.25,199.9 431.00,209.1 431.50,214.6 432.00,219.3 432.25,219.9 432.50,219.4 433.50,215.2 434.25,211.5 434.50,210.5 435.75,216.5 436.25,218.6 436.50,217.8 436.75,214.2 437.00,210.1 437.25,205.7 437.50,201.1 438.00,191.0 438.25,185.6 438.50,188.8 439.00,199.1 439.25,203.8 439.50,208.4 439.75,212.6 440.00,216.4 440.25,216.9 441.25,212.8 441.50,212.9 442.25,216.0 442.50,216.6 443.50,212.2 443.75,211.7 445.00,217.2 445.75,219.9 446.00,218.8 446.25,215.1 446.50,211.0 446.75,206.4 447.00,201.6 447.25,196.4 447.75,185.5 448.00,184.7 448.50,195.8 448.75,200.9 449.00,205.8 449.25,210.4 449.50,214.6 449.75,218.4 450.00,219.1 451.25,215.5 451.50,215.7 452.50,218.6 452.75,218.2 454.00,213.3 454.25,212.4 455.50,217.5 456.25,220.0 456.50,220.4 458.00,220.3 458.25,219.7 458.75,215.7 459.25,211.1 459.75,206.1 460.00,204.0 460.75,211.6 461.25,216.2 461.50,216.5 462.00,211.8 462.75,203.9 463.00,204.4 463.75,212.3 464.25,216.9 464.50,218.9 464.75,219.2 465.75,217.2 466.00,217.3 466.50,214.8 466.75,214.0 467.00,213.6 467.75,214.0 468.00,213.8 468.50,210.2 468.75,210.5 469.25,209.7 469.50,209.8 469.75,210.4 470.00,211.3 470.25,210.6 470.50,208.7 471.00,212.1 471.50,210.8 471.75,210.6 472.25,211.4 472.50,210.7 473.25,214.4 473.50,212.9 474.25,205.7 474.50,206.1 475.25,213.2 475.75,217.4 476.00,219.2 476.25,220.3 476.50,220.3 478.00,216.7 478.25,216.3 479.75,220.0 480.00,220.3 480.25,219.6 480.50,217.4 481.00,212.4 481.50,206.8 482.00,200.6 482.25,203.0 482.75,209.0 483.25,214.4 483.50,216.9 483.75,215.5 484.50,208.7 484.75,206.2 485.00,205.6 485.75,212.8 486.25,217.0 486.50,218.9 486.75,220.2 487.00,220.3 487.75,218.7 488.75,216.2 490.00,219.3 490.25,219.3 491.25,215.0 492.00,211.4 492.25,210.7 493.50,216.6 494.00,218.7 494.25,218.7 495.25,215.8 495.50,215.3 497.00,219.6 497.25,220.2 497.50,220.2 497.75,219.4 498.50,214.5 499.25,208.8 499.50,210.1 500.25,215.7 500.50,217.3 500.75,214.7 501.25,208.1 501.75,200.8 502.00,196.8 502.25,195.4 502.75,203.2 503.25,210.4 503.50,213.6 503.75,216.6 504.00,219.3 504.25,220.1 505.75,216.0 506.00,215.2 507.50,219.5 507.75,220.1 508.00,220.3 508.25,219.7 508.75,216.6 509.50,211.2 509.75,209.2 510.00,209.8 510.75,215.4 511.00,213.7 511.75,207.6 512.50,213.6 512.75,212.9 513.50,209.7 513.75,209.1 514.25,209.3 514.75,203.3 515.00,200.1 515.25,202.8 515.75,208.9 516.00,209.4 516.25,208.9 516.50,209.0 517.00,210.4 517.50,205.7 518.25,212.4 518.50,212.8 518.75,210.0 519.25,202.7 519.75,194.7 520.00,196.8 520.50,204.6 521.00,211.6 521.25,214.8 521.50,217.7 521.75,218.3 523.00,213.4 523.25,212.4 524.75,218.2 525.00,217.6 526.00,213.0 526.50,210.5 527.00,212.8 528.00,217.4 528.25,218.2 529.00,213.1 529.50,209.2 529.75,209.7 530.50,215.3 531.00,218.6 531.25,219.7 531.75,216.7 532.50,211.3 532.75,209.3 533.00,209.6 533.75,215.2 534.25,218.5 534.50,218.5 535.00,214.0 535.50,208.8 536.00,203.1 536.25,203.4 536.75,209.0 537.25,214.2 537.50,216.5 537.75,215.0 538.50,209.3 538.75,209.6 539.25,213.4 539.50,213.0 539.75,211.9 540.00,211.2 540.50,206.8 540.75,208.6 541.00,210.8 541.25,212.4 541.50,211.9 542.25,208.8 542.50,208.2 542.75,208.2 543.00,208.6 543.50,210.8 543.75,211.4 544.00,211.5 544.25,211.0 544.75,209.4 545.00,208.9 545.25,208.9 545.50,209.6 545.75,210.6 546.25,205.9 546.50,207.7 547.00,212.3 547.25,213.4 547.50,213.4 548.00,214.4 548.75,208.7 549.00,210.3 549.50,214.1 549.75,215.1 550.25,209.5 550.75,203.2 551.00,199.9 551.25,201.2 551.75,207.6 552.25,213.5 552.75,218.5 553.00,219.9 554.25,220.0 554.50,218.2 554.75,215.3 555.00,212.0 555.50,204.6 556.00,196.5 556.25,192.2 556.75,200.6 557.25,208.3 557.50,211.9 557.75,215.2 558.00,218.2 558.25,219.4 559.50,215.8 559.75,215.3 561.00,218.9 561.25,217.5 562.00,211.7 562.50,207.3 562.75,208.1 563.00,210.3 563.25,209.0 563.50,208.1 563.75,207.8 564.00,208.2 564.25,207.2 564.50,204.6 565.00,209.6 565.25,209.5 565.75,207.5 566.00,207.1 566.25,207.5 566.50,208.5 566.75,208.7 567.25,202.9 567.50,202.9 568.00,208.6 568.50,213.9 569.00,218.5 569.25,220.3 571.50,220.5 573.00,217.4 573.25,217.4 574.75,220.5 576.25,220.6 577.00,220.6 577.25,219.5 577.75,216.0 578.50,209.9 578.75,207.7 579.00,207.7 579.75,214.1 580.25,217.8 580.50,219.5 580.75,220.5 581.50,220.4 581.75,219.1 582.25,215.8 583.00,210.0 583.25,207.8 583.50,209.3 584.25,215.2 584.75,218.7 585.00,220.2 585.25,220.6 585.75,220.6 586.75,218.8 587.50,217.1 589.00,220.2 589.75,220.4 591.25,220.3 591.50,218.7 591.75,216.0 592.25,209.9 592.75,202.9 593.25,195.2 594.00,206.1 594.50,212.8 594.75,215.8 595.00,217.6 595.25,214.5 595.50,211.1 596.00,203.4 596.50,195.0 596.75,191.9 597.25,200.5 597.75,208.5 598.00,212.1 598.25,215.5 598.50,218.5 598.75,220.2 599.25,220.3 599.50,220.1 600.75,217.5 601.00,217.3 602.25,219.9 603.00,220.1 604.25,220.2 604.50,217.5 604.75,213.6 605.00,209.2 605.25,204.5 605.50,199.5 605.75,194.2 606.25,182.9 606.50,186.2 607.00,197.3 607.25,202.4 607.50,207.3 607.75,211.8 608.00,215.9 608.25,219.5 608.50,220.1 609.25,220.1 609.50,219.9 610.50,216.3 611.50,212.4 612.75,217.4 613.50,220.0 613.75,220.3 614.75,220.2 615.00,219.9 615.25,217.5 615.75,212.1 616.25,205.8 616.75,199.0 617.00,199.7 617.50,206.5 618.00,212.6 618.25,215.4 618.50,217.8 619.25,212.9 619.50,211.1 619.75,209.6 620.50,214.9 621.25,219.5 621.50,220.3 622.25,220.3 623.75,216.7 624.00,216.3 625.50,220.0 625.75,220.3 626.00,219.8 626.50,217.1 626.75,216.2 627.00,215.0 627.75,209.7 628.00,211.0 628.25,212.0 628.75,209.1 629.00,208.3 629.25,205.6 629.50,202.4 629.75,200.5 630.25,206.7 630.50,207.4 630.75,202.9 631.25,193.2 631.50,188.0 631.75,188.2 632.25,198.3 632.50,203.1 632.75,207.6 633.00,206.6 633.50,200.3 633.75,202.6 634.00,205.7 634.25,207.8 634.50,208.7 634.75,207.4 635.25,200.8 635.50,198.6 636.00,205.4 636.50,211.6 637.00,217.1 637.25,218.6 637.50,219.3 638.75,214.6 639.25,212.5 639.50,213.2 640.75,218.1 641.00,219.0 641.25,219.3 642.25,215.3 643.00,212.0 643.25,211.9 644.50,217.4 645.25,220.1 646.50,220.3 646.75,218.6 647.00,215.9 647.50,209.7 648.00,202.7 648.50,195.1 649.00,202.7 649.50,209.8 650.00,216.0 650.25,218.6 650.50,220.0 651.25,220.0 651.50,219.8 652.25,216.1 652.50,215.1 653.00,213.6 653.50,207.4 654.00,200.6 654.25,197.0 654.75,204.1 655.00,207.4 655.25,209.8 655.50,210.1 656.00,211.8 656.25,210.9 656.50,208.9 656.75,210.1 657.00,211.7 657.25,211.0 657.50,210.5 657.75,210.5 658.00,211.1 658.50,213.3 658.75,212.5 659.25,208.2 659.50,207.2 660.25,213.7 660.75,217.4 661.00,219.1 661.25,219.9 661.50,219.3 661.75,217.0 662.25,211.7 662.75,205.7 663.25,199.1 663.50,202.0 664.00,208.4 664.50,214.1 664.75,215.2 665.25,209.3 665.75,202.6 666.00,199.0 666.25,198.5 666.75,205.5 667.25,211.9 667.75,217.5 668.00,219.9 669.00,220.0 669.25,219.5 669.75,215.8 670.25,211.4 670.75,206.5 671.00,205.3 671.75,212.5 672.00,214.7 672.25,214.6 672.75,209.5 673.25,203.9 673.50,202.6 674.25,211.0 674.75,215.9 675.00,217.7 675.25,214.7 675.50,211.5 676.00,204.3 676.50,196.3 676.75,194.1 677.25,202.2 677.75,209.7 678.00,213.1 678.25,216.2 678.50,219.0 678.75,219.8 679.00,219.8 679.25,219.3 679.50,216.5 679.75,213.3 680.25,206.2 680.75,198.2 681.00,193.9 681.25,194.7 681.75,203.0 682.25,210.5 682.50,213.9 682.75,217.0 683.00,218.3 683.25,216.7 683.75,212.8 684.00,211.3 684.25,209.4 684.50,209.6 684.75,210.2 685.00,210.3 685.25,210.0 685.50,209.2 685.75,207.8 686.25,204.7 686.50,202.7 687.25,189.5 687.75,198.7 688.25,207.2 688.50,206.0 688.75,201.4 689.25,191.6 689.50,186.3 689.75,189.9 690.25,199.9 690.50,204.5 690.75,208.9 691.00,213.0 691.25,216.7 691.50,218.5 691.75,218.8 692.25,214.5 692.75,209.6 693.25,204.2 693.50,204.1 694.25,212.1 694.75,216.7 695.00,218.7 695.25,220.1 695.50,218.8 696.00,213.9 696.50,208.1 697.00,201.7 697.25,199.4 697.75,205.9 698.25,211.9 698.75,217.2 699.00,219.5 699.25,220.0 699.75,220.0 700.00,218.7 700.50,214.5 701.00,209.5 701.50,204.1 701.75,204.2 702.50,212.1 702.75,214.5 703.00,216.6 703.50,211.1 704.00,204.8 704.50,197.9 705.00,204.8 705.50,211.1 706.00,216.6 706.25,219.0 706.50,220.2 708.00,220.3 708.25,220.0 709.25,216.4 710.25,212.3 711.50,217.4 712.25,219.9 713.25,217.1 714.00,214.5 714.25,214.8 715.50,218.8 715.75,219.5 716.00,218.7 716.50,214.9 717.25,208.3 717.50,205.9 717.75,207.7 718.50,214.3 719.00,218.2 719.25,219.9 719.50,220.4 719.75,220.4 720.00,220.1 721.50,216.0 721.75,215.2 723.25,219.5 723.50,219.7 724.00,215.9 724.50,211.6 725.00,206.7 725.25,205.1 726.00,212.4 726.50,216.6 727.00,220.3 727.25,220.0 727.75,216.0 728.25,211.2 729.00,203.2 729.25,205.1 729.75,210.4 730.25,215.2 730.75,219.4 731.00,220.2 731.25,219.9 731.75,216.8 732.50,211.5 732.75,209.5 733.00,209.5 733.75,215.1 734.00,216.6 735.00,212.2 735.25,211.7 736.50,217.2 736.75,218.1 737.00,218.5 737.50,213.8 738.00,208.4 738.50,202.4 738.75,202.3 739.25,208.2 739.75,213.6 740.25,218.3 740.50,220.2 740.75,220.1 741.75,218.3 742.00,218.3 743.00,220.0 743.25,220.2 743.50,219.6 743.75,217.1 744.00,214.3 744.50,207.9 745.00,200.8 745.25,197.1 745.50,198.0 746.00,205.3 746.50,212.0 746.75,215.0 747.00,217.7 747.25,220.2 747.50,219.9 748.50,216.1 749.50,211.7 749.75,212.2 751.00,217.6 751.25,218.6 751.75,214.4 752.25,209.7 752.75,204.5 753.00,205.6 753.50,210.7 753.75,212.4 754.00,207.4 754.25,201.9 754.50,196.0 754.75,189.9 755.00,183.4 755.25,176.8 755.50,179.9 755.75,186.5 756.00,192.8 756.25,198.8 756.50,204.5 756.75,209.7 757.00,214.6 757.25,218.8 757.50,219.2 758.75,214.8 759.00,213.9 759.25,213.6 760.25,217.3 760.50,215.6 760.75,212.3 761.25,205.1 761.75,197.0 762.00,192.7 762.25,196.0 762.75,204.1 763.25,211.5 763.50,214.8 763.75,217.9 764.00,219.7 764.25,219.7 764.50,218.0 764.75,214.9 765.00,211.4 765.50,203.7 766.00,195.1 766.25,190.7 766.75,199.5 767.25,207.7 767.50,211.4 767.75,214.9 768.00,216.5 768.50,212.0 769.25,204.4 769.50,205.6 770.25,213.1 770.50,215.4 770.75,216.0 771.25,210.4 771.75,204.0 772.00,200.7 772.25,198.7 772.75,205.5 773.25,211.7 773.75,217.2 774.00,219.5 774.25,220.3 774.75,220.2 776.25,216.6 776.50,216.4 778.00,220.1 778.25,220.4 778.50,220.4 778.75,220.1 779.00,217.8 779.25,215.1 779.75,209.2 780.25,202.5 780.50,198.9 780.75,198.7 781.25,205.7 781.75,212.0 782.25,217.6 782.50,219.9 783.25,220.0 783.75,216.9 784.25,212.9 785.00,206.0 785.25,207.6 785.50,209.9 786.00,208.7 786.25,208.7 786.50,209.4 787.00,211.2 787.25,209.3 787.50,209.7 787.75,211.7 788.00,212.1 788.25,212.2 788.50,212.7 788.75,213.8 789.00,215.4 789.25,215.3 789.50,211.8 789.75,208.1 790.25,199.8 790.75,190.8 791.00,193.6 791.50,202.4 792.00,210.4 792.25,214.0 792.50,217.3 792.75,219.1 793.50,217.5 793.75,217.3 795.00,219.9 795.50,219.9 795.75,219.3 796.00,216.9 796.50,211.6 797.00,205.6 797.50,199.0 798.25,208.4 798.75,214.1 799.00,213.1 799.75,206.2 800.00,207.4 800.75,214.1 801.25,218.0 801.50,218.9 801.75,216.3 802.25,210.4 802.75,203.6 803.25,196.2 803.50,199.5 804.00,206.7 804.50,213.1 804.75,216.0 805.00,216.4 806.00,212.0 806.25,211.9 807.50,217.3 807.75,217.0 808.00,213.9 808.25,210.4 808.75,202.8 809.25,194.5 809.50,193.5 810.00,201.9 810.25,205.9 810.50,204.4 811.00,195.8 811.25,191.2 811.50,193.2 812.00,202.1 812.50,210.1 812.75,213.7 813.00,217.0 813.25,218.0 814.50,212.6 814.75,211.5 816.25,217.8 816.50,218.5 817.50,215.6 817.75,215.5 819.25,219.7 819.50,220.3 820.00,220.5 820.25,220.5 820.75,219.3 822.00,215.0 822.25,214.0 822.50,213.5 823.75,218.0 824.25,219.6 824.50,219.5 825.25,218.2 825.50,218.4 827.00,220.9 860.00,221.0 860.00,224.0 827.00,224.1 825.50,226.6 825.25,226.8 824.50,225.5 824.25,225.4 823.75,227.0 822.50,231.5 822.25,231.0 822.00,230.0 820.75,225.7 820.25,224.5 820.00,224.5 819.50,224.7 819.25,225.3 817.75,229.5 817.50,229.4 816.50,226.5 816.25,227.2 814.75,233.5 814.50,232.4 813.25,227.0 813.00,228.0 812.75,231.3 812.50,234.9 812.00,242.9 811.50,251.8 811.25,253.8 811.00,249.2 810.50,240.6 810.25,239.1 810.00,243.1 809.50,251.5 809.25,250.5 808.75,242.2 808.25,234.6 808.00,231.1 807.75,228.0 807.50,227.7 806.25,233.1 806.00,233.0 805.00,228.6 804.75,229.0 804.50,231.9 804.00,238.3 803.50,245.5 803.25,248.8 802.75,241.4 802.25,234.6 801.75,228.7 801.50,226.1 801.25,227.0 800.75,230.9 800.00,237.6 799.75,238.8 799.00,231.9 798.75,230.9 798.25,236.6 797.50,246.0 797.00,239.4 796.50,233.4 796.00,228.1 795.75,225.7 795.50,225.1 795.00,225.1 793.75,227.7 793.50,227.5 792.75,225.9 792.50,227.7 792.25,231.0 792.00,234.6 791.50,242.6 791.00,251.4 790.75,254.2 790.25,245.2 789.75,236.9 789.50,233.2 789.25,229.7 789.00,229.6 788.75,231.2 788.50,232.3 788.25,232.8 788.00,232.9 787.75,233.3 787.50,235.3 787.25,235.7 787.00,233.8 786.50,235.6 786.25,236.3 786.00,236.3 785.50,235.1 785.25,237.4 785.00,239.0 784.25,232.1 783.75,228.1 783.25,225.0 782.50,225.1 782.25,227.4 781.75,233.0 781.25,239.3 780.75,246.3 780.50,246.1 780.25,242.5 779.75,235.8 779.25,229.9 779.00,227.2 778.75,224.9 778.50,224.6 778.25,224.6 778.00,224.9 776.50,228.6 776.25,228.4 774.75,224.8 774.25,224.7 774.00,225.5 773.75,227.8 773.25,233.3 772.75,239.5 772.25,246.3 772.00,244.3 771.75,241.0 771.25,234.6 770.75,229.0 770.50,229.6 770.25,231.9 769.50,239.4 769.25,240.6 768.50,233.0 768.00,228.5 767.75,230.1 767.50,233.6 767.25,237.3 766.75,245.5 766.25,254.3 766.00,249.9 765.50,241.3 765.00,233.6 764.75,230.1 764.50,227.0 764.25,225.3 764.00,225.3 763.75,227.1 763.50,230.2 763.25,233.5 762.75,240.9 762.25,249.0 762.00,252.3 761.75,248.0 761.25,239.9 760.75,232.7 760.50,229.4 760.25,227.7 759.25,231.4 759.00,231.1 758.75,230.2 757.50,225.8 757.25,226.2 757.00,230.4 756.75,235.3 756.50,240.5 756.25,246.2 756.00,252.2 755.75,258.5 755.50,265.1 755.25,268.2 755.00,261.6 754.75,255.1 754.50,249.0 754.25,243.1 754.00,237.6 753.75,232.6 753.50,234.3 753.00,239.4 752.75,240.5 752.25,235.3 751.75,230.6 751.25,226.4 751.00,227.4 749.75,232.8 749.50,233.3 748.50,228.9 747.50,225.1 747.25,224.8 747.00,227.3 746.75,230.0 746.50,233.0 746.00,239.7 745.50,247.0 745.25,247.9 745.00,244.2 744.50,237.1 744.00,230.7 743.75,227.9 743.50,225.4 743.25,224.8 743.00,225.0 742.00,226.7 741.75,226.7 740.75,224.9 740.50,224.8 740.25,226.7 739.75,231.4 739.25,236.8 738.75,242.7 738.50,242.6 738.00,236.6 737.50,231.2 737.00,226.5 736.75,226.9 736.50,227.8 735.25,233.3 735.00,232.8 734.00,228.4 733.75,229.9 733.00,235.5 732.75,235.5 732.50,233.5 731.75,228.2 731.25,225.1 731.00,224.8 730.75,225.6 730.25,229.8 729.75,234.6 729.25,239.9 729.00,241.8 728.25,233.8 727.75,229.0 727.25,225.0 727.00,224.7 726.50,228.4 726.00,232.6 725.25,239.9 725.00,238.3 724.50,233.4 724.00,229.1 723.50,225.3 723.25,225.5 721.75,229.8 721.50,229.0 720.00,224.9 719.75,224.6 719.50,224.6 719.25,225.1 719.00,226.8 718.50,230.7 717.75,237.3 717.50,239.1 717.25,236.7 716.50,230.1 716.00,226.3 715.75,225.5 715.50,226.2 714.25,230.2 714.00,230.5 713.25,227.9 712.25,225.1 711.50,227.6 710.25,232.7 709.25,228.6 708.25,225.0 708.00,224.7 706.50,224.8 706.25,226.0 706.00,228.4 705.50,233.9 705.00,240.2 704.50,247.1 704.00,240.2 703.50,233.9 703.00,228.4 702.75,230.5 702.50,232.9 701.75,240.8 701.50,240.9 701.00,235.5 700.50,230.5 700.00,226.3 699.75,225.0 699.25,225.0 699.00,225.5 698.75,227.8 698.25,233.1 697.75,239.1 697.25,245.6 697.00,243.3 696.50,236.9 696.00,231.1 695.50,226.2 695.25,224.9 695.00,226.3 694.75,228.3 694.25,232.9 693.50,240.9 693.25,240.8 692.75,235.4 692.25,230.5 691.75,226.2 691.50,226.5 691.25,228.3 691.00,232.0 690.75,236.1 690.50,240.5 690.25,245.1 689.75,255.1 689.50,258.7 689.25,253.4 688.75,243.6 688.50,239.0 688.25,237.8 687.75,246.3 687.25,255.5 686.50,242.3 686.25,240.3 685.75,237.2 685.50,235.8 685.25,235.0 685.00,234.7 684.75,234.8 684.50,235.4 684.25,235.6 684.00,233.7 683.75,232.2 683.25,228.3 683.00,226.7 682.75,228.0 682.50,231.1 682.25,234.5 681.75,242.0 681.25,250.3 681.00,251.1 680.75,246.8 680.25,238.8 679.75,231.7 679.50,228.5 679.25,225.7 679.00,225.2 678.75,225.2 678.50,226.0 678.25,228.8 678.00,231.9 677.75,235.3 677.25,242.8 676.75,250.9 676.50,248.7 676.00,240.7 675.50,233.5 675.25,230.3 675.00,227.3 674.75,229.1 674.25,234.0 673.50,242.4 673.25,241.1 672.75,235.5 672.25,230.4 672.00,230.3 671.75,232.5 671.00,239.7 670.75,238.5 670.25,233.6 669.75,229.2 669.25,225.5 669.00,225.0 668.00,225.1 667.75,227.5 667.25,233.1 666.75,239.5 666.25,246.5 666.00,246.0 665.75,242.4 665.25,235.7 664.75,229.8 664.50,230.9 664.00,236.6 663.50,243.0 663.25,245.9 662.75,239.3 662.25,233.3 661.75,228.0 661.50,225.7 661.25,225.1 661.00,225.9 660.75,227.6 660.25,231.3 659.50,237.8 659.25,236.8 658.75,232.5 658.50,231.7 658.00,233.9 657.75,234.5 657.50,234.5 657.25,234.0 657.00,233.3 656.75,234.9 656.50,236.1 656.25,234.1 656.00,233.2 655.50,234.9 655.25,235.2 655.00,237.6 654.75,240.9 654.25,248.0 654.00,244.4 653.50,237.6 653.00,231.4 652.50,229.9 652.25,228.9 651.50,225.2 651.25,225.0 650.50,225.0 650.25,226.4 650.00,229.0 649.50,235.2 649.00,242.3 648.50,249.9 648.00,242.3 647.50,235.3 647.00,229.1 646.75,226.4 646.50,224.7 645.25,224.9 644.50,227.6 643.25,233.1 643.00,233.0 642.25,229.7 641.25,225.7 641.00,226.0 640.75,226.9 639.50,231.8 639.25,232.5 638.75,230.4 637.50,225.7 637.25,226.4 637.00,227.9 636.50,233.4 636.00,239.6 635.50,246.4 635.25,244.2 634.75,237.6 634.50,236.3 634.25,237.2 634.00,239.3 633.75,242.4 633.50,244.7 633.00,238.4 632.75,237.4 632.50,241.9 632.25,246.7 631.75,256.8 631.50,257.0 631.25,251.8 630.75,242.1 630.50,237.6 630.25,238.3 629.75,244.5 629.50,242.6 629.25,239.4 629.00,236.7 628.75,235.9 628.25,233.0 628.00,234.0 627.75,235.3 627.00,230.0 626.75,228.8 626.50,227.9 626.00,225.2 625.75,224.7 625.50,225.0 624.00,228.7 623.75,228.3 622.25,224.7 621.50,224.7 621.25,225.5 620.50,230.1 619.75,235.4 619.50,233.9 619.25,232.1 618.50,227.2 618.25,229.6 618.00,232.4 617.50,238.5 617.00,245.3 616.75,246.0 616.25,239.2 615.75,232.9 615.25,227.5 615.00,225.1 614.75,224.8 613.75,224.7 613.50,225.0 612.75,227.6 611.50,232.6 610.50,228.7 609.50,225.1 609.25,224.9 608.50,224.9 608.25,225.5 608.00,229.1 607.75,233.2 607.50,237.7 607.25,242.6 607.00,247.7 606.50,258.8 606.25,262.1 605.75,250.8 605.50,245.5 605.25,240.5 605.00,235.8 604.75,231.4 604.50,227.5 604.25,224.8 603.00,224.9 602.25,225.1 601.00,227.7 600.75,227.5 599.50,224.9 599.25,224.7 598.75,224.8 598.50,226.5 598.25,229.5 598.00,232.9 597.75,236.5 597.25,244.5 596.75,253.1 596.50,250.0 596.00,241.6 595.50,233.9 595.25,230.5 595.00,227.4 594.75,229.2 594.50,232.2 594.00,238.9 593.25,249.8 592.75,242.1 592.25,235.1 591.75,229.0 591.50,226.3 591.25,224.7 589.75,224.6 589.00,224.8 587.50,227.9 586.75,226.2 585.75,224.4 585.25,224.4 585.00,224.8 584.75,226.3 584.25,229.8 583.50,235.7 583.25,237.2 583.00,235.0 582.25,229.2 581.75,225.9 581.50,224.6 580.75,224.5 580.50,225.5 580.25,227.2 579.75,230.9 579.00,237.3 578.75,237.3 578.50,235.1 577.75,229.0 577.25,225.5 577.00,224.4 576.25,224.4 574.75,224.5 573.25,227.6 573.00,227.6 571.50,224.5 569.25,224.7 569.00,226.5 568.50,231.1 568.00,236.4 567.50,242.1 567.25,242.1 566.75,236.3 566.50,236.5 566.25,237.5 566.00,237.9 565.75,237.5 565.25,235.5 565.00,235.4 564.50,240.4 564.25,237.8 564.00,236.8 563.75,237.2 563.50,236.9 563.25,236.0 563.00,234.7 562.75,236.9 562.50,237.7 562.00,233.3 561.25,227.5 561.00,226.1 559.75,229.7 559.50,229.2 558.25,225.6 558.00,226.8 557.75,229.8 557.50,233.1 557.25,236.7 556.75,244.4 556.25,252.8 556.00,248.5 555.50,240.4 555.00,233.0 554.75,229.7 554.50,226.8 554.25,225.0 553.00,225.1 552.75,226.5 552.25,231.5 551.75,237.4 551.25,243.8 551.00,245.1 550.75,241.8 550.25,235.5 549.75,229.9 549.50,230.9 549.00,234.7 548.75,236.3 548.00,230.6 547.50,231.6 547.25,231.6 547.00,232.7 546.50,237.3 546.25,239.1 545.75,234.4 545.50,235.4 545.25,236.1 545.00,236.1 544.75,235.6 544.25,234.0 544.00,233.5 543.75,233.6 543.50,234.2 543.00,236.4 542.75,236.8 542.50,236.8 542.25,236.2 541.50,233.1 541.25,232.6 541.00,234.2 540.75,236.4 540.50,238.2 540.00,233.8 539.75,233.1 539.50,232.0 539.25,231.6 538.75,235.4 538.50,235.7 537.75,230.0 537.50,228.5 537.25,230.8 536.75,236.0 536.25,241.6 536.00,241.9 535.50,236.2 535.00,231.0 534.50,226.5 534.25,226.5 533.75,229.8 533.00,235.4 532.75,235.7 532.50,233.7 531.75,228.3 531.25,225.3 531.00,226.4 530.50,229.7 529.75,235.3 529.50,235.8 529.00,231.9 528.25,226.8 528.00,227.6 527.00,232.2 526.50,234.5 526.00,232.0 525.00,227.4 524.75,226.8 523.25,232.6 523.00,231.6 521.75,226.7 521.50,227.3 521.25,230.2 521.00,233.4 520.50,240.4 520.00,248.2 519.75,250.3 519.25,242.3 518.75,235.0 518.50,232.2 518.25,232.6 517.50,239.3 517.00,234.6 516.50,236.0 516.25,236.1 516.00,235.6 515.75,236.1 515.25,242.2 515.00,244.9 514.75,241.7 514.25,235.7 513.75,235.9 513.50,235.3 512.75,232.1 512.50,231.4 511.75,237.4 511.00,231.3 510.75,229.6 510.00,235.2 509.75,235.8 509.50,233.8 508.75,228.4 508.25,225.3 508.00,224.7 507.75,224.9 507.50,225.5 506.00,229.8 505.75,229.0 504.25,224.9 504.00,225.7 503.75,228.4 503.50,231.4 503.25,234.6 502.75,241.8 502.25,249.6 502.00,248.2 501.75,244.2 501.25,236.9 500.75,230.3 500.50,227.7 500.25,229.3 499.50,234.9 499.25,236.2 498.50,230.5 497.75,225.6 497.50,224.8 497.25,224.8 497.00,225.4 495.50,229.7 495.25,229.2 494.25,226.3 494.00,226.3 493.50,228.4 492.25,234.3 492.00,233.6 491.25,230.0 490.25,225.7 490.00,225.7 488.75,228.8 487.75,226.3 487.00,224.7 486.75,224.8 486.50,226.1 486.25,228.0 485.75,232.2 485.00,239.4 484.75,238.8 484.50,236.3 483.75,229.5 483.50,228.1 483.25,230.6 482.75,236.0 482.25,242.0 482.00,244.4 481.50,238.2 481.00,232.6 480.50,227.6 480.25,225.4 480.00,224.7 479.75,225.0 478.25,228.7 478.00,228.3 476.50,224.7 476.25,224.7 476.00,225.8 475.75,227.6 475.25,231.8 474.50,238.9 474.25,239.3 473.50,232.1 473.25,230.6 472.50,234.3 472.25,233.6 471.75,234.4 471.50,234.2 471.00,232.9 470.50,236.3 470.25,234.4 470.00,233.7 469.75,234.6 469.50,235.2 469.25,235.3 468.75,234.5 468.50,234.8 468.00,231.2 467.75,231.0 467.00,231.4 466.75,231.0 466.50,230.2 466.00,227.7 465.75,227.8 464.75,225.8 464.50,226.1 464.25,228.1 463.75,232.7 463.00,240.6 462.75,241.1 462.00,233.2 461.50,228.5 461.25,228.8 460.75,233.4 460.00,241.0 459.75,238.9 459.25,233.9 458.75,229.3 458.25,225.3 458.00,224.7 456.50,224.6 456.25,225.0 455.50,227.5 454.25,232.6 454.00,231.7 452.75,226.8 452.50,226.4 451.50,229.3 451.25,229.5 450.00,225.9 449.75,226.6 449.50,230.4 449.25,234.6 449.00,239.2 448.75,244.1 448.50,249.2 448.00,260.3 447.75,259.5 447.25,248.6 447.00,243.4 446.75,238.6 446.50,234.0 446.25,229.9 446.00,226.2 445.75,225.1 445.00,227.8 443.75,233.3 443.50,232.8 442.50,228.4 442.25,229.0 441.50,232.1 441.25,232.2 440.25,228.1 440.00,228.6 439.75,232.4 439.50,236.6 439.25,241.2 439.00,245.9 438.50,256.2 438.25,259.4 438.00,254.0 437.50,243.9 437.25,239.3 437.00,234.9 436.75,230.8 436.50,227.2 436.25,226.4 435.75,228.5 434.50,234.5 434.25,233.5 433.50,229.8 432.50,225.6 432.25,225.1 432.00,225.7 431.50,230.4 431.00,235.9 430.25,245.1 430.00,241.9 429.50,235.8 429.00,230.4 428.75,234.2 428.50,238.8 428.25,243.6 428.00,248.7 427.50,259.6 427.25,259.5 426.75,248.6 426.50,243.5 426.25,238.7 426.00,234.2 425.75,230.0 425.50,227.1 424.25,232.1 424.00,232.2 423.75,231.1 422.50,226.3 422.25,226.2 422.00,228.0 421.50,232.3 420.75,239.5 420.50,238.7 420.25,236.2 419.50,229.4 419.00,225.6 418.75,224.7 418.50,224.9 418.25,226.3 417.75,229.6 417.00,235.2 416.75,235.9 416.50,233.9 415.75,228.5 415.25,225.4 415.00,225.2 414.75,226.6 414.25,229.9 413.50,235.5 413.25,235.5 413.00,233.6 412.25,228.2 411.75,225.1 411.50,224.8 411.25,226.3 411.00,228.8 410.75,231.5 410.25,237.5 409.75,244.1 409.50,246.5 409.00,239.7 408.50,233.5 408.00,228.0 407.75,227.2 406.50,232.6 406.25,233.5 406.00,232.3 404.75,227.0 404.50,227.7 403.50,231.4 403.25,231.1 402.75,229.2 401.50,225.1 401.25,225.0 401.00,226.5 400.50,230.0 399.75,235.9 399.50,236.9 399.25,234.8 398.50,229.0 398.00,225.7 397.75,227.0 397.25,230.8 396.50,237.5 396.25,238.8 395.50,232.0 395.00,228.0 394.75,227.3 394.25,230.8 393.50,236.9 393.25,235.9 393.00,233.9 392.25,228.2 391.75,225.0 391.50,224.9 391.25,226.0 391.00,228.0 390.50,232.6 389.75,240.5 389.50,241.2 389.00,235.8 388.50,230.8 388.00,226.5 387.75,227.9 387.50,230.7 387.25,233.9 386.75,240.7 386.25,248.2 386.00,247.7 385.75,243.9 385.25,236.7 384.75,230.3 384.50,227.5 384.25,225.1 383.75,225.0 383.50,226.2 383.25,228.9 382.75,235.0 382.25,242.0 381.75,249.6 381.50,246.3 381.25,242.6 380.75,235.5 380.25,229.3 380.00,226.6 379.75,224.8 379.50,225.3 379.00,227.2 377.50,233.6 376.50,229.1 375.50,225.2 375.25,224.9 374.75,224.9 374.50,225.9 374.25,228.5 373.75,234.4 373.25,241.1 372.75,248.5 372.50,245.7 372.00,238.6 371.75,237.5 371.50,236.9 371.25,236.5 371.00,236.7 370.75,237.6 370.25,240.3 370.00,241.2 369.75,241.3 369.25,239.7 369.00,242.7 368.75,242.6 368.25,236.6 368.00,234.4 367.75,234.3 367.50,233.8 367.25,234.2 367.00,236.2 366.75,234.8 366.25,231.0 365.50,226.1 365.25,226.5 364.75,228.6 363.50,234.6 363.00,232.0 362.00,227.5 361.75,227.5 361.50,228.6 360.25,234.6 359.25,229.7 358.25,225.5 358.00,224.9 356.50,228.6 356.25,228.4 354.75,224.8 354.50,225.3 354.00,227.0 352.75,232.0 352.50,232.4 352.25,231.3 352.00,230.9 351.75,232.6 351.50,234.0 351.25,234.7 351.00,234.9 350.75,235.8 350.50,235.2 350.25,234.2 350.00,234.6 349.75,235.7 349.50,238.6 349.25,243.4 349.00,248.6 348.50,259.5 348.25,260.3 347.75,249.2 347.50,244.1 347.25,239.2 347.00,235.9 346.75,236.6 346.50,236.9 346.25,236.6 346.00,235.6 345.50,232.4 345.25,232.0 345.00,233.2 344.75,232.9 344.50,231.8 343.25,226.5 343.00,226.9 342.75,229.0 342.25,233.7 341.50,241.8 341.25,240.0 340.75,234.6 340.25,229.8 339.75,225.6 339.50,224.8 339.00,224.9 338.75,226.4 338.50,228.3 338.00,232.3 337.25,239.3 336.25,230.5 335.75,226.7 335.50,226.7 335.25,229.5 335.00,232.5 334.50,239.2 334.00,246.6 333.75,249.4 333.50,245.6 333.00,238.2 332.50,231.7 332.25,228.7 332.00,228.4 331.25,231.1 331.00,231.3 330.25,228.5 330.00,228.0 328.75,233.9 328.50,234.1 327.50,229.2 326.50,225.1 326.25,224.8 324.75,227.9 323.25,224.7 323.00,224.7 322.75,225.4 322.50,227.7 322.00,233.2 321.50,239.3 321.00,246.1 320.75,244.5 320.50,241.1 320.00,234.8 319.50,229.1 319.25,226.6 319.00,225.1 318.50,226.6 317.25,231.1 317.00,231.4 316.75,230.4 315.50,226.0 315.25,228.3 315.00,231.4 314.75,234.7 314.25,242.0 313.75,250.1 313.50,249.4 313.25,245.4 312.75,237.7 312.25,230.9 312.00,227.8 311.75,228.1 311.25,232.5 310.50,240.1 310.25,239.9 309.75,234.7 309.25,230.1 308.75,226.0 308.50,225.6 308.25,228.4 308.00,232.1 307.75,236.2 307.50,240.6 307.25,245.3 306.75,255.3 306.50,258.5 306.25,253.3 305.75,243.5 305.50,242.8 305.25,247.8 304.75,258.3 304.50,258.0 304.25,252.7 303.75,242.6 303.50,238.0 303.25,233.7 303.00,229.7 302.75,230.9 302.50,233.1 301.75,240.3 301.00,233.0 300.50,228.7 300.25,229.2 300.00,231.7 299.50,237.4 299.00,243.6 298.75,243.5 298.25,237.3 297.75,231.7 297.25,226.8 297.00,227.4 296.50,231.4 295.75,238.2 295.50,238.2 295.25,235.8 294.50,229.4 294.25,230.8 294.00,236.0 293.75,241.7 293.50,247.8 293.25,254.3 293.00,261.1 292.75,268.2 292.50,272.3 292.25,265.0 292.00,258.1 291.75,251.4 291.50,245.1 291.25,239.1 291.00,233.7 290.75,228.7 290.50,225.4 288.75,225.7 288.50,227.9 288.00,233.0 287.50,238.8 287.00,245.1 286.50,238.9 286.00,233.1 285.75,232.4 285.50,235.7 285.00,243.0 284.50,250.9 284.25,246.9 283.75,239.3 283.25,232.4 283.00,229.3 282.75,226.5 281.75,229.4 281.50,229.4 280.00,225.2 279.50,225.0 279.25,226.4 279.00,229.7 278.75,233.5 278.50,237.6 278.25,242.0 278.00,246.7 277.50,256.6 277.25,255.4 277.00,250.4 276.50,241.0 276.25,236.7 276.00,232.6 275.75,228.9 275.50,225.7 275.25,224.9 274.25,224.9 274.00,225.2 273.50,226.8 272.25,231.8 272.00,232.5 271.00,228.4 270.00,224.9 269.75,224.6 269.25,224.6 269.00,225.4 268.50,229.6 268.00,234.6 267.25,243.1 266.50,234.9 266.00,229.8 265.50,225.5 265.25,225.8 264.75,227.7 263.50,233.2 263.25,232.9 262.50,229.6 261.50,225.6 261.25,225.3 261.00,227.0 260.50,230.9 259.75,237.6 259.50,238.7 259.25,236.4 258.50,229.8 258.00,226.1 257.75,225.5 257.00,228.5 255.75,234.5 254.75,229.8 253.75,225.6 253.50,224.9 253.00,224.9 252.75,226.1 252.50,229.0 252.25,232.2 252.00,235.7 251.50,243.4 251.00,251.7 250.75,249.6 250.25,241.4 249.75,233.9 249.50,230.6 249.25,227.8 249.00,229.4 248.25,235.0 248.00,236.0 247.50,232.2 246.75,227.0 246.50,226.7 246.25,230.9 246.00,235.6 245.75,240.8 245.50,246.4 245.25,252.2 245.00,258.4 244.75,264.8 244.50,265.7 244.25,259.3 244.00,253.1 243.75,247.2 243.50,241.6 243.25,236.3 243.00,231.5 242.75,227.3 242.50,225.1 241.50,225.2 241.25,225.9 240.75,227.8 239.50,233.3 239.25,232.8 238.00,227.4 237.75,228.4 237.50,231.4 237.25,234.6 236.75,241.8 236.25,249.6 236.00,248.2 235.75,244.2 235.25,236.9 234.75,230.3 234.50,227.4 234.25,225.2 233.50,225.3 233.25,226.1 233.00,229.5 232.75,233.3 232.50,237.5 232.25,242.0 232.00,246.7 231.50,256.9 231.25,256.9 231.00,251.7 230.50,242.0 230.25,237.6 230.00,233.4 229.75,229.5 229.50,231.7 229.25,234.1 228.50,242.2 228.00,236.8 227.50,231.7 227.00,227.3 226.75,225.5 226.50,225.5 226.25,228.1 226.00,232.2 225.75,236.8 225.50,241.8 225.25,247.1 225.00,252.7 224.50,264.5 224.25,259.9 224.00,254.1 223.75,248.4 223.50,243.1 223.25,238.0 223.00,233.3 222.75,229.0 222.50,227.0 221.25,231.6 221.00,230.9 220.50,229.0 219.25,224.9 219.00,224.8 218.75,225.2 218.25,229.3 217.75,234.1 217.00,242.2 216.25,234.3 215.75,229.5 215.25,225.4 215.00,224.7 213.50,224.7 213.25,226.0 213.00,228.0 212.50,232.4 211.75,239.9 211.50,240.0 211.00,234.9 210.50,230.2 210.00,226.1 209.75,224.5 209.25,224.6 209.00,225.1 208.25,229.6 207.50,234.8 207.25,234.4 206.50,229.2 205.75,224.8 205.50,224.4 204.75,224.4 204.00,224.6 202.75,228.3 202.00,230.7 201.50,229.0 200.25,225.1 200.00,226.1 199.50,229.1 198.75,234.3 198.50,235.0 197.75,229.7 197.00,225.2 196.75,224.6 195.25,224.7 195.00,226.7 194.50,231.3 194.00,236.6 193.50,242.4 193.25,241.8 192.75,236.1 192.25,230.8 191.75,226.3 191.50,224.5 191.25,224.5 191.00,224.9 189.75,227.5 189.50,227.7 188.00,224.6 187.00,224.6 186.50,228.5 186.00,233.2 185.25,241.2 185.00,240.6 184.50,235.2 184.00,230.3 183.50,226.0 183.25,224.6 182.75,224.6 182.50,225.2 182.00,226.9 180.75,231.8 180.50,232.5 179.50,228.4 178.50,224.9 177.25,224.8 177.00,226.1 176.75,229.1 176.50,232.4 176.25,236.0 175.75,243.9 175.25,252.5 175.00,250.6 174.50,242.1 174.00,234.4 173.75,230.9 173.50,227.8 173.25,225.0 173.00,224.7 172.25,224.7 172.00,225.2 170.50,229.5 170.25,229.4 169.75,227.9 168.50,224.6 168.25,224.4 167.00,224.4 166.75,225.4 166.00,229.9 165.25,235.2 165.00,234.0 164.75,232.2 164.00,227.3 163.50,224.6 162.50,224.7 161.75,226.3 161.50,227.2 161.00,230.6 160.25,236.3 160.00,235.5 159.75,235.3 159.25,234.5 159.00,234.5 158.75,235.1 158.25,237.2 158.00,239.5 157.75,238.6 157.25,235.8 156.75,232.4 156.50,231.5 156.25,231.5 155.50,233.1 155.25,233.3 155.00,232.9 154.75,232.1 154.50,232.5 154.25,233.8 154.00,234.1 153.25,230.5 152.25,226.1 152.00,226.2 151.25,227.8 150.50,226.3 149.75,225.0 149.25,229.0 148.75,233.7 148.00,241.7 147.75,240.0 147.00,232.2 146.50,227.6 146.25,227.8 145.75,232.0 145.00,239.2 144.75,239.0 144.50,236.5 143.75,229.7 143.50,231.7 143.25,235.0 142.75,242.2 142.25,250.1 142.00,247.7 141.75,243.8 141.25,236.4 140.75,229.9 140.50,227.9 140.25,231.6 140.00,235.8 139.75,240.3 139.50,245.1 139.25,250.1 138.75,260.8 138.50,255.5 138.00,245.2 137.75,240.4 137.50,235.9 137.25,233.1 136.50,240.7 136.25,239.2 135.75,234.1 135.25,229.5 135.00,227.8 134.00,231.5 133.75,230.9 133.00,228.2 132.75,229.0 132.25,233.8 131.50,241.8 131.25,239.9 130.75,234.6 130.25,229.8 129.75,225.6 129.50,224.7 129.25,225.0 128.50,227.6 127.25,232.6 126.75,230.6 125.50,225.9 125.25,225.8 124.75,227.7 123.50,233.2 123.25,232.9 122.50,229.6 121.50,225.6 121.25,225.1 119.75,229.2 119.50,229.6 118.50,226.7 118.25,227.4 117.75,232.4 117.25,238.1 116.75,244.4 116.50,242.7 116.00,236.6 115.50,231.0 115.00,226.2 114.75,225.1 114.25,226.7 113.00,231.2 112.75,231.3 111.75,227.6 111.50,230.2 111.25,233.7 111.00,237.6 110.50,246.1 110.00,255.3 109.75,251.4 109.25,242.5 108.75,234.4 108.50,230.8 108.25,227.5 108.00,225.1 107.75,225.8 107.50,227.6 107.00,231.6 106.25,238.4 106.00,238.0 105.25,231.3 105.00,229.5 104.75,231.6 104.00,238.7 103.75,239.4 103.50,236.9 102.75,230.0 102.50,231.0 102.00,236.4 101.50,242.3 101.25,243.0 100.75,237.0 100.25,231.6 100.00,230.9 99.50,236.1 99.00,241.9 98.75,242.4 98.25,236.6 97.75,231.3 97.25,226.7 97.00,224.8 96.75,224.9 95.75,226.6 95.50,226.8 95.00,225.8 94.75,226.1 93.75,228.7 93.50,228.4 92.50,225.9 92.25,226.1 91.00,230.1 90.75,230.6 90.50,229.7 89.25,225.8 89.00,226.1 88.00,228.6 87.75,228.4 86.75,225.9 86.50,225.6 86.00,227.3 84.75,232.3 84.50,232.0 83.75,228.9 83.50,228.2 82.25,234.2 82.00,233.7 81.00,229.0 80.75,230.5 80.00,236.7 79.75,236.8 79.50,234.7 78.75,228.8 78.50,228.1 77.50,232.1 77.25,232.2 76.25,228.1 75.50,230.6 75.25,230.1 74.25,226.8 73.75,230.0 73.00,235.3 72.75,234.0 72.50,232.2 71.75,227.3 71.50,227.3 70.75,229.5 70.50,229.3 69.00,225.1 68.75,226.6 68.50,228.6 68.00,233.0 67.25,240.5 67.00,238.7 66.50,233.8 66.00,229.3 65.50,225.4 65.25,225.1 64.00,227.8 63.75,227.4 63.25,226.3 62.75,228.4 61.50,234.4 61.25,233.6 60.50,229.9 59.50,225.7 59.25,225.6 58.25,227.8 58.00,227.5 57.00,225.3 56.75,226.3 56.25,229.5 55.50,235.1 55.25,236.0 54.50,230.3 53.75,225.5 53.50,225.6 52.50,227.8 52.25,227.5 51.25,225.3 51.00,225.7 49.75,229.2 49.50,229.6 48.50,226.7 48.00,225.6 46.75,228.7 46.50,228.4 45.25,225.3 45.00,225.3 44.00,227.5 43.75,227.8 42.75,225.6 42.25,227.4 41.00,232.4 40.75,231.9 39.50,227.0 39.25,226.8 38.25,230.1 38.00,230.6 37.00,227.3 36.75,227.2 36.50,228.3 35.25,234.2 35.00,233.7 34.75,232.4 33.75,227.8 33.50,228.3 32.50,232.7 32.25,233.4 31.75,231.1 31.25,229.1 30.50,232.2 30.25,232.1 30.00,231.1 28.75,226.3 27.50,229.8 26.75,227.5 26.25,226.3 26.00,227.2 24.75,232.2 24.50,232.1 24.25,231.1 23.00,226.3 22.25,224.0 16.00,224.0"/>
<polygon points="16.00,331.0 27.25,330.8 27.50,330.7 29.00,327.0 29.25,326.3 29.50,326.0 31.00,329.9 31.25,330.3 32.25,328.7 33.50,330.5 33.75,330.6 34.00,330.4 35.00,326.9 36.00,322.9 36.25,322.8 37.50,327.8 38.00,329.5 38.25,329.9 39.50,326.3 40.00,324.9 41.50,329.4 42.00,330.6 43.25,330.7 43.75,330.2 44.75,328.7 46.25,330.8 48.00,330.6 49.50,327.8 49.75,328.1 50.50,329.5 50.75,329.3 52.00,325.1 52.25,324.2 52.50,323.7 53.75,328.1 54.00,328.9 54.25,329.2 55.25,326.9 55.50,327.2 56.25,328.9 56.50,328.1 57.50,323.6 58.00,321.0 58.25,320.3 59.50,326.5 60.25,329.6 60.50,330.5 60.75,330.6 62.00,328.7 63.25,330.5 64.00,330.6 64.25,330.3 65.50,326.5 66.25,323.8 67.50,328.1 68.25,330.3 68.50,330.7 70.75,330.6 71.50,329.7 71.75,329.8 72.50,330.6 73.25,330.5 73.50,329.3 74.00,325.9 74.75,319.9 75.00,317.8 75.25,318.7 76.00,324.8 76.50,328.4 76.75,329.1 77.25,325.5 78.00,319.2 78.25,316.9 78.50,317.7 79.25,324.2 79.75,328.0 80.00,329.7 80.25,330.4 81.00,330.4 81.25,329.2 82.00,324.5 82.75,319.1 83.50,324.6 84.25,329.3 84.50,330.5 86.00,327.7 87.50,330.5 88.25,330.5 89.25,327.4 90.25,323.6 90.50,323.2 91.50,327.1 91.75,327.2 92.50,324.6 92.75,324.0 94.00,328.2 94.50,329.7 94.75,329.9 96.00,327.1 96.25,326.9 97.75,330.3 98.25,330.5 98.75,330.4 99.00,330.2 99.50,326.6 100.00,322.5 100.75,315.4 101.00,317.5 101.75,324.3 102.25,328.2 102.50,329.6 103.00,325.6 103.50,320.9 104.00,315.7 104.25,313.6 105.00,321.4 105.50,326.0 105.75,328.1 106.00,328.7 107.00,326.1 107.25,326.2 108.50,329.5 108.75,327.4 109.00,324.6 109.50,318.5 110.00,311.6 110.25,307.9 110.50,308.3 111.00,315.5 111.50,322.0 111.75,325.0 112.00,327.7 112.25,330.1 112.50,330.2 113.75,327.8 114.00,328.1 114.75,329.5 115.00,329.4 115.50,325.3 116.00,320.6 116.50,315.4 116.75,314.0 117.50,321.7 118.00,326.3 118.50,330.2 118.75,330.0 120.00,326.5 120.50,324.9 122.25,329.9 122.50,330.1 122.75,327.8 123.25,322.6 123.75,316.6 124.25,310.0 124.50,310.4 125.00,316.9 125.50,322.9 126.00,328.1 126.25,329.7 127.25,326.0 128.00,322.8 128.25,322.2 129.50,327.4 130.00,329.2 130.25,327.6 130.75,323.6 131.50,316.7 131.75,316.2 132.50,323.2 133.00,327.2 133.25,329.1 133.50,330.4 134.50,330.4 134.75,330.2 135.25,327.1 136.00,321.7 136.25,319.7 136.50,318.5 137.25,324.4 137.75,327.8 138.00,329.4 138.25,330.0 139.25,326.3 140.25,322.1 140.50,322.9 141.75,328.0 142.00,328.9 142.75,326.6 143.50,324.0 143.75,324.6 145.00,328.8 145.25,328.4 146.25,323.8 147.00,320.0 148.25,326.2 148.75,328.4 149.50,325.9 150.25,322.9 151.50,327.6 152.25,330.1 152.50,330.4 152.75,330.4 153.00,329.1 153.75,324.4 154.25,320.8 154.50,319.3 155.25,324.7 155.50,326.4 155.75,326.5 156.75,322.0 157.00,321.2 157.25,322.4 157.50,322.7 157.75,322.6 158.00,323.0 158.25,324.0 158.50,323.6 158.75,322.5 159.00,322.5 160.25,327.6 160.50,326.5 161.00,322.3 161.75,315.3 162.50,322.3 163.00,326.4 163.50,330.0 164.00,330.2 164.25,330.3 164.50,328.8 165.00,324.3 165.50,319.1 166.00,313.4 166.25,312.4 166.75,318.2 167.25,323.5 167.75,328.2 168.00,330.2 168.25,330.5 168.50,330.5 169.25,328.8 170.25,326.1 170.50,326.1 172.00,330.0 173.00,330.0 173.25,329.0 173.50,325.2 173.75,320.8 174.00,315.9 174.25,310.7 174.50,305.2 174.75,299.4 175.00,293.4 175.25,290.7 175.75,302.7 176.00,308.4 176.25,313.7 176.50,318.7 176.75,323.3 177.00,327.4 177.25,327.2 177.75,322.9 178.50,315.6 178.75,315.5 179.50,322.8 179.75,325.0 180.00,325.8 180.75,320.5 181.00,319.6 181.50,323.3 181.75,324.2 182.50,324.2 182.75,323.9 183.25,322.1 183.50,321.2 183.75,320.6 184.00,320.5 184.25,320.1 184.50,319.9 185.00,323.6 185.25,324.4 185.75,324.5 186.00,324.1 186.25,323.1 186.50,323.7 187.75,328.3 188.00,328.9 188.50,327.9 188.75,328.0 190.00,330.3 191.00,330.4 191.25,329.7 191.75,325.5 192.25,320.5 193.00,312.1 193.25,314.7 193.75,320.2 194.25,325.2 194.75,329.5 195.00,330.5 195.50,330.5 196.50,328.5 197.25,326.8 198.75,330.1 199.00,330.3 200.00,327.0 201.00,323.2 201.25,323.6 202.50,328.3 202.75,329.0 203.75,326.3 204.00,325.9 205.50,329.8 205.75,330.4 206.00,330.5 206.25,329.5 207.00,324.8 207.75,319.3 208.00,320.7 208.75,326.0 209.25,329.1 209.50,330.4 210.75,330.5 211.00,329.7 211.75,325.1 212.50,319.7 212.75,320.4 213.50,325.7 214.00,328.8 214.25,330.2 215.00,330.3 215.25,329.2 215.75,324.4 216.25,318.8 217.00,309.6 217.50,316.0 218.00,321.9 218.50,327.1 218.75,327.7 220.00,322.2 220.25,321.0 221.50,326.7 222.25,329.6 222.50,330.0 222.75,327.6 223.00,324.4 223.25,320.9 223.75,313.1 224.25,304.5 224.50,301.0 225.00,309.9 225.50,318.0 225.75,321.8 226.00,325.2 226.25,328.3 226.50,329.6 227.50,325.6 228.50,321.0 229.75,326.7 230.50,329.6 230.75,330.3 231.25,330.3 231.50,328.5 232.00,324.1 232.50,319.0 233.00,313.5 233.25,314.1 234.00,322.1 234.50,326.8 234.75,328.9 235.00,329.1 235.50,325.7 236.25,319.8 236.50,317.6 236.75,318.9 237.50,325.0 238.00,328.5 238.25,330.0 238.50,330.4 238.75,330.4 240.25,327.1 240.50,327.0 241.75,329.8 242.00,330.2 242.50,330.2 242.75,328.9 243.00,325.7 243.25,322.1 243.50,318.2 244.00,309.6 244.50,300.1 244.75,300.8 245.25,310.2 245.75,318.8 246.00,322.6 246.25,326.2 246.50,329.0 247.00,325.4 247.75,319.0 248.00,316.7 248.50,319.0 249.00,315.6 249.25,312.7 249.50,312.0 249.75,315.1 250.25,318.5 250.50,319.9 250.75,319.6 251.00,318.6 251.50,322.6 251.75,324.2 252.00,326.2 252.50,329.4 252.75,330.3 254.25,330.5 255.75,327.7 257.25,330.5 258.75,330.6 259.50,327.8 260.50,323.1 261.00,320.5 261.25,320.8 262.25,325.7 263.25,329.9 263.50,330.3 265.25,330.2 265.50,329.1 266.00,324.4 266.50,318.8 267.25,309.6 267.75,316.0 268.25,321.9 268.75,327.1 269.25,322.8 270.00,315.5 270.25,315.7 271.00,323.0 271.25,322.6 272.00,315.6 272.25,317.3 273.00,324.2 273.50,328.1 273.75,329.8 274.00,330.1 275.50,330.3 275.75,328.6 276.25,324.0 276.75,318.6 277.25,312.7 277.50,312.0 278.00,318.0 278.50,323.4 279.00,328.1 279.25,330.2 279.50,330.4 279.75,330.4 280.25,329.4 281.50,326.1 281.75,326.1 283.00,329.4 283.25,329.6 283.75,326.3 284.50,320.4 284.75,318.3 285.00,318.2 285.75,324.3 286.00,326.2 286.25,325.9 287.00,319.6 287.25,317.4 287.50,317.3 288.25,323.9 288.75,327.7 289.00,329.4 289.25,330.0 289.75,330.0 290.00,328.7 290.25,325.8 290.50,322.5 291.00,315.3 291.50,307.3 291.75,303.0 292.00,306.0 292.50,314.1 293.00,321.5 293.25,324.8 293.50,327.8 293.75,327.2 294.50,321.1 295.00,316.6 295.25,318.0 296.00,324.5 296.50,328.3 296.75,326.2 297.00,323.1 297.50,316.3 298.00,308.6 298.25,304.6 298.50,307.0 299.00,314.7 299.50,321.8 299.75,325.0 300.00,327.9 300.25,328.6 300.75,324.9 301.50,318.5 301.75,316.2 302.50,322.8 303.00,326.8 303.25,328.6 303.50,329.9 303.75,329.8 304.00,327.4 304.50,321.9 305.00,315.7 305.50,308.8 305.75,309.8 306.25,316.6 306.75,322.8 307.00,325.6 307.25,326.6 308.00,320.4 308.25,318.2 308.50,316.5 309.25,323.1 309.50,325.2 309.75,324.5 310.00,320.3 310.25,315.8 310.50,310.9 311.00,300.5 311.25,294.9 311.50,296.3 312.00,307.1 312.25,312.2 312.50,317.0 312.75,321.4 313.00,325.5 313.25,324.4 313.75,318.0 314.25,311.0 314.50,307.2 314.75,307.9 315.25,315.2 315.75,321.9 316.00,324.9 316.25,327.6 316.50,329.9 317.00,330.0 317.25,329.9 317.75,325.9 318.25,321.3 319.00,313.5 320.00,323.4 320.50,327.8 320.75,329.7 321.00,330.5 321.25,330.3 322.75,327.0 323.00,327.1 324.50,330.4 325.00,330.6 326.25,330.6 326.50,330.4 327.50,327.1 328.50,323.3 328.75,323.5 330.00,328.2 330.25,328.1 331.50,323.9 332.50,327.4 332.75,325.1 333.00,321.1 333.25,316.8 333.50,312.3 334.00,302.3 334.25,297.0 334.50,297.8 335.00,308.1 335.25,312.9 335.50,317.4 335.75,321.7 336.00,325.6 336.25,326.8 336.75,322.3 337.50,314.6 337.75,314.7 338.50,322.4 339.00,326.9 339.25,328.9 339.50,330.0 339.75,330.0 340.00,328.5 340.50,323.8 341.00,318.3 341.50,312.3 341.75,311.7 342.25,317.8 342.75,323.3 343.25,328.1 343.50,329.5 344.75,326.2 345.00,326.0 346.25,329.3 346.50,327.4 346.75,324.3 347.00,321.0 347.50,313.7 348.00,305.6 348.25,304.2 348.75,312.3 349.00,316.2 349.25,318.2 349.50,318.6 349.75,317.7 350.00,315.1 350.25,316.0 350.50,318.5 350.75,317.8 351.00,316.7 351.25,316.0 351.50,316.0 351.75,316.5 352.25,320.0 352.50,321.6 352.75,322.7 353.00,323.1 353.50,319.3 353.75,320.7 354.50,326.0 354.75,327.6 355.00,328.2 356.25,323.6 356.50,323.2 357.75,328.0 358.50,330.3 359.00,327.1 359.75,321.4 360.25,317.1 361.00,323.4 361.50,327.1 362.00,330.3 362.25,330.2 362.50,329.6 363.00,326.4 363.75,320.8 364.00,318.8 364.25,319.4 365.00,325.2 365.25,326.9 365.50,327.4 366.00,322.7 366.50,317.6 366.75,314.8 367.00,312.8 367.25,315.3 367.50,314.8 367.75,315.1 368.00,313.1 368.50,305.7 369.00,313.2 369.25,312.5 369.50,311.1 369.75,310.6 370.00,311.0 370.25,312.3 370.75,316.0 371.00,316.2 371.50,308.7 371.75,304.8 372.50,316.0 373.00,322.7 373.25,325.7 373.50,328.5 373.75,329.9 375.00,326.0 375.50,324.2 375.75,324.4 377.00,328.6 377.50,326.7 378.50,321.9 378.75,320.6 379.00,320.8 380.00,325.7 380.50,327.9 380.75,326.0 381.25,321.5 382.00,313.9 382.75,321.5 383.25,326.0 383.75,329.9 384.00,330.2 384.50,330.2 384.75,328.4 385.25,323.5 385.75,317.9 386.25,311.8 386.50,311.3 387.00,317.4 387.50,323.1 388.00,328.0 388.25,330.1 389.25,327.2 390.00,324.6 390.25,324.1 391.50,328.3 392.25,330.5 393.00,328.4 394.25,324.2 394.50,324.5 395.75,328.7 396.00,329.4 396.25,329.3 397.50,326.1 397.75,326.4 399.25,330.2 399.50,330.4 400.25,330.2 401.00,326.0 401.75,320.9 402.00,320.7 402.75,325.8 403.00,326.8 403.50,321.6 404.00,315.8 404.25,312.7 404.50,310.3 405.00,316.6 405.50,322.3 406.00,327.4 406.25,329.6 406.50,328.4 407.25,323.8 407.75,320.3 408.00,321.3 408.75,326.3 409.00,326.9 409.50,321.8 410.00,316.0 410.25,312.9 410.50,310.1 411.00,316.4 411.50,322.2 412.00,327.2 412.25,326.9 413.00,324.3 413.25,324.4 414.50,328.6 415.00,330.1 415.25,330.4 415.75,330.3 417.25,326.6 417.50,325.9 419.00,329.8 419.25,330.3 419.50,328.5 420.00,323.6 420.50,318.0 421.00,311.9 421.25,311.2 421.75,317.4 422.25,323.0 422.50,325.6 422.75,326.6 423.50,321.7 423.75,319.9 424.50,325.1 424.75,326.6 425.00,327.5 426.25,322.3 426.50,322.6 427.75,327.8 428.00,327.8 429.25,322.7 429.50,322.2 430.75,327.5 431.25,329.3 431.50,328.8 432.00,325.3 432.75,319.1 433.00,316.9 433.75,323.3 434.25,327.0 434.50,328.7 434.75,329.4 435.75,325.7 436.50,322.5 436.75,322.5 438.00,327.6 438.25,327.1 439.00,322.3 439.25,320.5 439.50,321.1 440.25,326.1 440.75,329.0 441.00,326.1 441.25,322.9 441.75,315.6 442.25,307.5 442.50,303.2 442.75,305.0 443.25,313.2 443.75,320.8 444.00,324.2 444.25,327.3 444.50,330.0 444.75,330.1 445.25,329.2 446.50,325.9 448.00,329.8 448.25,330.2 448.50,328.6 448.75,326.0 449.25,320.0 449.75,313.1 450.00,309.5 450.25,306.1 450.75,313.5 451.25,320.3 451.75,326.3 452.00,328.9 452.25,330.0 452.50,328.0 453.00,323.0 453.50,317.4 454.00,311.2 454.25,311.9 454.75,318.0 455.25,323.6 455.75,328.5 456.00,330.0 456.25,330.0 456.50,327.8 456.75,325.0 457.25,318.8 457.75,311.9 458.00,308.2 458.25,307.4 458.75,314.7 459.25,321.3 459.50,324.4 459.75,327.2 460.00,329.4 460.25,326.9 460.50,324.1 461.00,317.8 461.50,310.8 461.75,307.0 462.00,308.6 462.50,315.8 463.00,322.3 463.25,325.3 463.50,328.0 463.75,328.4 464.50,323.7 465.00,320.2 465.25,321.4 466.00,326.3 466.50,329.2 466.75,330.2 467.50,330.2 468.25,325.9 469.00,320.9 469.25,320.7 470.00,325.8 470.25,327.3 470.50,327.4 471.25,321.7 471.75,317.3 472.00,318.7 472.75,324.9 473.25,328.4 473.50,330.0 473.75,328.8 474.25,324.7 474.75,320.1 475.25,315.0 475.50,315.5 476.25,322.9 476.75,327.3 477.00,329.2 477.25,330.3 477.50,330.3 477.75,329.1 478.25,325.7 479.00,319.6 479.25,317.4 479.50,318.6 480.25,324.8 480.75,328.4 481.00,329.9 481.25,329.7 482.50,325.8 483.00,324.0 484.00,327.3 484.25,327.2 484.75,322.1 485.25,316.4 485.75,310.1 486.75,321.8 487.00,324.5 487.25,326.8 487.75,322.4 488.50,314.9 488.75,315.6 489.50,323.0 489.75,325.2 490.00,325.0 490.50,318.8 491.00,311.8 491.25,308.1 491.50,307.5 492.00,314.8 492.50,321.4 492.75,324.5 493.00,327.2 493.25,328.9 494.75,323.9 496.00,328.2 496.50,329.7 496.75,330.2 497.00,330.0 497.50,326.2 498.00,321.7 498.75,314.1 499.00,316.3 499.75,323.7 500.25,327.9 500.50,327.6 501.00,323.4 501.75,316.0 502.00,314.4 502.75,322.0 503.25,326.4 503.50,328.4 503.75,330.0 504.00,327.6 504.25,324.9 504.75,318.7 505.25,311.7 505.50,308.0 505.75,307.6 506.25,314.9 506.75,321.5 507.00,324.6 507.25,327.3 508.00,324.9 508.25,324.0 510.00,329.6 510.25,330.0 510.75,330.1 511.00,327.9 511.25,325.2 511.75,319.0 512.25,312.1 512.50,308.4 512.75,307.2 513.25,314.5 513.75,321.2 514.00,324.2 514.25,327.0 514.50,329.5 514.75,329.8 516.00,325.9 516.50,324.1 516.75,324.6 517.75,328.0 518.00,326.6 518.75,320.7 519.00,318.5 519.25,317.5 520.00,323.8 520.50,327.5 520.75,329.2 521.00,330.0 521.25,328.5 521.50,325.8 522.00,319.8 522.50,313.0 522.75,309.3 523.00,306.3 523.50,313.7 524.00,320.4 524.50,326.4 524.75,325.1 525.25,319.7 525.75,313.7 526.00,310.5 526.25,312.6 526.75,318.6 527.25,324.2 527.75,328.9 528.00,329.8 528.50,329.9 528.75,328.6 529.25,324.4 530.00,317.2 530.25,314.6 530.50,315.8 531.25,323.2 531.50,324.6 532.00,318.3 532.50,311.3 532.75,307.6 533.00,308.0 533.50,315.2 534.00,321.8 534.25,324.8 534.50,327.6 534.75,328.4 536.00,324.2 536.25,324.5 537.50,328.7 537.75,329.4 538.00,329.8 538.75,325.5 539.50,320.3 539.75,321.3 540.50,326.3 541.25,330.4 541.50,330.2 542.50,326.6 543.50,322.3 543.75,322.6 545.00,327.7 545.50,329.5 545.75,329.9 546.00,327.8 546.50,322.8 547.00,317.1 547.50,310.9 547.75,312.2 548.25,318.3 548.75,323.8 549.00,326.4 549.25,327.3 549.50,324.5 550.00,318.2 550.50,311.2 550.75,307.5 551.00,308.1 551.50,315.3 552.00,321.9 552.25,323.4 552.75,317.0 553.25,309.9 553.50,306.2 553.75,309.4 554.25,316.6 554.75,323.0 555.00,325.9 555.25,328.6 555.50,327.6 556.25,321.8 556.75,317.5 557.00,318.5 557.75,324.7 558.25,328.3 558.50,329.9 559.00,330.2 559.25,330.0 559.50,327.9 560.00,322.9 560.50,317.3 561.00,311.0 561.25,312.0 561.75,318.1 562.25,323.7 562.75,328.6 563.00,330.3 563.50,330.3 563.75,329.2 564.25,325.7 565.00,319.7 565.25,317.5 565.50,318.5 566.25,324.7 566.75,328.3 567.00,329.9 567.25,330.3 567.50,329.7 568.00,325.8 568.50,321.3 569.00,316.3 569.25,314.1 570.00,321.7 570.50,326.2 571.00,330.0 571.25,330.1 571.50,327.9 572.00,323.0 572.50,317.3 573.00,311.1 573.25,311.9 573.75,318.1 574.25,323.6 574.75,328.5 575.00,330.2 575.25,330.2 575.50,329.9 576.50,326.2 577.50,321.9 578.75,327.1 579.00,326.9 580.00,322.7 580.25,322.2 581.50,327.4 581.75,328.4 582.00,327.5 582.75,322.7 583.00,320.9 583.25,320.7 584.00,325.8 584.25,327.3 584.50,326.8 585.50,322.6 585.75,322.3 587.00,327.5 587.25,328.4 587.50,329.0 588.50,326.4 588.75,326.1 590.25,329.9 590.50,330.4 591.25,330.4 591.50,329.7 592.00,325.6 592.50,320.7 593.25,312.5 594.25,323.0 594.75,327.6 595.00,329.6 595.25,327.8 595.75,323.7 596.50,316.5 596.75,314.6 597.50,322.1 598.00,326.4 598.50,330.2 599.00,330.4 599.75,330.4 600.50,328.1 601.75,323.5 602.00,323.3 603.25,328.0 603.75,329.7 604.00,330.1 604.25,330.1 604.50,327.7 604.75,323.9 605.00,319.7 605.25,315.2 605.50,310.3 606.00,299.9 606.25,294.4 606.50,297.6 607.00,308.2 607.25,313.2 607.50,317.8 607.75,322.2 608.00,326.2 608.25,329.6 608.50,330.1 609.50,330.0 609.75,329.6 611.00,325.6 611.50,323.9 612.50,327.4 613.25,321.7 613.75,317.4 614.00,319.0 614.75,325.1 615.25,328.6 615.50,328.5 615.75,325.9 616.25,319.8 616.75,312.9 617.00,309.2 617.25,305.9 617.75,313.3 618.25,320.2 618.75,326.2 619.00,328.7 619.50,323.8 620.00,318.2 620.50,311.9 620.75,310.3 621.25,316.7 621.75,322.5 622.25,327.6 622.50,329.8 622.75,330.2 623.50,330.2 624.00,329.5 624.75,328.0 625.00,327.9 626.00,329.8 626.25,329.8 626.50,328.0 626.75,325.4 627.25,319.4 627.75,312.6 628.00,309.1 628.25,307.8 628.50,310.4 629.00,299.9 629.25,294.3 629.50,296.9 630.00,307.7 630.25,312.7 630.50,313.1 631.00,305.4 631.25,307.8 631.50,306.5 631.75,306.3 632.25,308.3 632.50,304.1 632.75,305.7 633.00,309.8 633.25,311.0 634.00,306.5 634.25,306.9 634.50,308.3 634.75,310.5 635.00,306.8 635.25,302.0 635.50,298.8 636.00,308.4 636.25,312.9 636.50,317.1 637.00,319.6 637.25,317.3 637.50,317.4 638.25,323.9 638.75,327.7 639.00,329.1 640.25,325.8 641.75,329.7 642.00,330.3 642.25,330.5 643.75,326.7 644.00,326.0 644.25,326.2 645.75,330.1 646.00,330.4 646.25,330.4 646.50,329.2 646.75,326.7 647.25,320.7 647.75,313.9 648.25,306.5 648.50,308.6 649.00,315.9 649.50,322.5 649.75,325.4 650.00,328.1 650.25,330.2 651.75,330.1 652.00,329.6 652.50,325.9 653.25,319.3 653.50,316.9 653.75,316.0 654.50,322.9 655.00,327.1 655.25,328.9 655.50,330.1 655.75,328.7 656.00,326.0 656.50,319.7 657.00,312.6 657.50,304.8 658.25,315.9 658.75,322.7 659.00,325.7 659.25,325.7 660.25,320.7 660.50,320.6 661.25,324.4 661.50,325.4 661.75,325.1 662.00,324.5 662.25,323.6 662.50,321.9 663.25,314.4 664.25,323.9 664.50,324.8 665.00,324.6 665.25,324.7 665.50,323.8 666.00,320.1 666.25,319.9 667.00,325.3 667.50,328.5 668.00,324.6 668.75,317.8 669.00,315.4 669.25,317.5 670.00,324.3 670.50,328.2 670.75,329.9 671.50,330.1 671.75,327.3 672.00,324.2 672.25,320.8 672.75,313.3 673.25,304.9 673.50,303.0 674.00,311.5 674.50,319.2 674.75,322.8 675.00,326.0 675.25,328.9 675.50,330.2 675.75,330.2 676.50,328.3 677.50,325.3 677.75,325.1 679.00,328.9 679.25,328.6 679.75,327.1 681.00,321.5 681.25,321.7 681.50,322.6 681.75,323.1 682.50,325.6 682.75,326.1 683.00,323.6 683.50,316.6 684.00,308.8 684.25,304.7 684.50,305.1 685.00,313.2 685.50,320.6 685.75,324.0 686.00,321.3 686.50,313.6 687.25,301.0 687.75,309.8 688.25,317.9 688.50,318.2 689.00,310.1 689.50,301.2 689.75,304.3 690.25,312.9 690.50,316.9 690.75,319.2 691.00,316.9 691.25,317.8 691.50,320.1 691.75,320.5 692.00,320.3 692.25,320.6 692.50,321.3 693.00,317.2 693.50,321.5 693.75,321.4 694.00,320.8 694.25,320.6 694.50,321.0 694.75,319.4 695.00,318.8 695.75,324.6 696.00,323.7 696.50,317.9 697.00,311.4 697.25,309.0 697.75,315.7 698.25,321.8 698.75,327.1 699.00,329.4 699.25,330.0 700.50,330.0 700.75,329.3 701.00,326.7 701.25,323.7 701.75,317.0 702.25,309.6 702.50,305.6 702.75,307.0 703.25,314.6 703.75,321.6 704.00,324.8 704.25,327.6 704.50,329.8 705.75,325.5 706.25,323.6 706.50,323.2 707.75,327.9 708.50,330.3 708.75,330.1 710.25,326.7 711.75,330.1 712.00,330.5 712.75,330.5 713.50,327.5 714.50,322.8 715.00,320.3 715.25,321.1 716.25,326.0 717.00,329.2 717.25,330.0 718.00,325.4 718.75,320.0 719.00,320.0 719.75,325.4 720.50,329.9 720.75,330.4 721.25,330.2 722.25,326.9 723.25,323.0 723.50,323.7 724.50,327.5 725.25,324.4 725.75,322.1 726.00,321.1 727.25,326.8 727.50,327.8 727.75,327.4 728.50,321.8 729.00,317.5 729.25,319.0 730.00,325.0 730.25,323.6 730.75,318.3 731.25,312.5 731.50,313.3 732.00,319.0 732.50,324.2 733.00,328.8 733.25,330.1 733.50,329.4 734.00,325.6 734.50,321.1 735.00,316.1 735.25,315.0 736.00,322.4 736.50,326.7 736.75,328.7 737.00,329.3 737.50,325.5 738.25,318.9 738.50,316.5 738.75,316.4 739.50,323.3 740.00,327.4 740.25,327.9 741.25,323.3 741.75,320.8 742.00,320.6 743.00,325.6 743.50,327.8 743.75,325.5 744.00,321.9 744.25,318.0 744.75,309.3 745.25,299.8 745.50,301.0 746.00,310.4 746.50,319.0 746.75,322.8 747.00,326.4 747.25,329.3 748.50,324.8 749.00,322.9 750.25,327.7 750.75,329.4 751.00,329.7 751.50,329.5 751.75,326.5 752.00,323.0 752.25,319.2 752.75,310.9 753.25,301.8 753.50,300.9 754.00,310.1 754.25,314.4 754.50,311.5 755.00,301.5 755.25,296.2 755.50,298.6 756.00,308.9 756.25,313.7 756.50,316.4 757.00,308.1 757.25,303.7 757.50,301.8 758.00,310.6 758.50,318.7 758.75,322.4 759.00,325.8 759.25,326.4 759.75,322.3 760.50,315.3 761.25,322.3 761.75,326.5 762.25,330.1 763.25,327.7 763.75,326.3 764.00,325.9 764.50,327.3 764.75,327.7 766.00,322.2 766.25,321.0 767.00,324.5 767.50,322.7 767.75,322.2 768.25,322.0 768.75,318.2 769.25,322.2 769.50,323.4 770.00,322.0 770.25,321.8 770.50,322.0 770.75,322.7 771.25,324.6 771.50,325.3 771.75,325.5 772.50,322.3 772.75,322.7 774.00,327.8 774.50,329.6 774.75,329.0 775.25,324.7 775.75,319.7 776.25,314.2 776.50,313.3 777.25,321.5 777.75,326.2 778.00,328.4 778.25,330.0 778.50,330.0 778.75,329.2 779.00,326.1 779.25,322.5 779.50,318.6 780.00,310.0 780.50,300.6 780.75,300.3 781.25,309.7 781.75,318.3 782.00,322.2 782.25,325.8 782.50,329.0 782.75,330.0 783.50,329.8 785.00,325.9 785.50,327.0 786.00,328.4 786.25,328.1 786.50,325.4 787.00,319.4 787.50,312.7 787.75,309.1 788.00,307.7 788.25,308.7 788.75,298.8 789.00,298.5 789.50,308.5 789.75,310.7 790.00,307.1 790.25,309.8 790.75,316.8 791.00,317.6 791.25,316.0 791.75,309.6 792.50,318.8 793.00,324.4 793.25,326.9 793.50,329.2 793.75,329.9 794.25,330.0 795.50,327.7 796.25,325.5 796.50,325.0 797.00,325.5 797.50,326.6 797.75,326.9 798.50,321.7 798.75,319.9 799.00,320.2 799.75,325.6 800.25,328.7 800.50,330.1 801.00,330.3 801.25,330.3 801.50,329.2 801.75,326.9 802.25,321.5 802.75,315.4 803.25,308.7 803.50,311.7 804.00,318.1 804.50,324.0 804.75,326.6 805.00,329.0 805.25,330.2 806.25,330.1 806.50,328.6 807.00,324.5 807.75,317.5 808.00,314.9 808.25,316.2 809.00,323.5 809.50,327.7 809.75,328.4 810.25,324.2 810.75,319.4 811.25,314.1 811.50,315.3 812.25,322.9 812.75,327.3 813.00,329.3 813.25,329.0 814.50,324.8 814.75,323.9 816.25,328.8 816.75,327.6 817.50,325.3 817.75,325.1 819.25,329.6 819.50,330.2 819.75,330.6 820.50,330.6 821.25,329.9 822.25,328.1 822.75,327.7 823.25,328.0 823.75,326.8 824.50,328.4 825.25,328.2 825.50,328.4 827.00,330.9 860.00,331.0 860.00,334.0 827.00,334.1 825.50,336.6 825.25,336.8 824.50,336.6 823.75,338.2 823.25,337.0 822.75,337.3 822.25,336.9 821.25,335.1 820.50,334.4 819.75,334.4 819.50,334.8 819.25,335.4 817.75,339.9 817.50,339.7 816.75,337.4 816.25,336.2 814.75,341.1 814.50,340.2 813.25,336.0 813.00,335.7 812.75,337.7 812.25,342.1 811.50,349.7 811.25,350.9 810.75,345.6 810.25,340.8 809.75,336.6 809.50,337.3 809.00,341.5 808.25,348.8 808.00,350.1 807.75,347.5 807.00,340.5 806.50,336.4 806.25,334.9 805.25,334.8 805.00,336.0 804.75,338.4 804.50,341.0 804.00,346.9 803.50,353.3 803.25,356.3 802.75,349.6 802.25,343.5 801.75,338.1 801.50,335.8 801.25,334.7 801.00,334.7 800.50,334.9 800.25,336.3 799.75,339.4 799.00,344.8 798.75,345.1 798.50,343.3 797.75,338.1 797.50,338.4 797.00,339.5 796.50,340.0 796.25,339.5 795.50,337.3 794.25,335.0 793.75,335.1 793.50,335.8 793.25,338.1 793.00,340.6 792.50,346.2 791.75,355.4 791.25,349.0 791.00,347.4 790.75,348.2 790.25,355.2 790.00,357.9 789.75,354.3 789.50,356.5 789.00,366.5 788.75,366.2 788.25,356.3 788.00,357.3 787.75,355.9 787.50,352.3 787.00,345.6 786.50,339.6 786.25,336.9 786.00,336.6 785.50,338.0 785.00,339.1 783.50,335.2 782.75,335.0 782.50,336.0 782.25,339.2 782.00,342.8 781.75,346.7 781.25,355.3 780.75,364.7 780.50,364.4 780.00,355.0 779.50,346.4 779.25,342.5 779.00,338.9 778.75,335.8 778.50,335.0 778.25,335.0 778.00,336.6 777.75,338.8 777.25,343.5 776.50,351.7 776.25,350.8 775.75,345.3 775.25,340.3 774.75,336.0 774.50,335.4 774.00,337.2 772.75,342.3 772.50,342.7 771.75,339.5 771.50,339.7 771.25,340.4 770.75,342.3 770.50,343.0 770.25,343.2 770.00,343.0 769.50,341.6 769.25,342.8 768.75,346.8 768.25,343.0 767.75,342.8 767.50,342.3 767.00,340.5 766.25,344.0 766.00,342.8 764.75,337.3 764.50,337.7 764.00,339.1 763.75,338.7 763.25,337.3 762.25,334.9 761.75,338.5 761.25,342.7 760.50,349.7 759.75,342.7 759.25,338.6 759.00,339.2 758.75,342.6 758.50,346.3 758.00,354.4 757.50,363.2 757.25,361.3 757.00,356.9 756.50,348.6 756.25,351.3 756.00,356.1 755.50,366.4 755.25,368.8 755.00,363.5 754.50,353.5 754.25,350.6 754.00,354.9 753.50,364.1 753.25,363.2 752.75,354.1 752.25,345.8 752.00,342.0 751.75,338.5 751.50,335.5 751.00,335.3 750.75,335.6 750.25,337.3 749.00,342.1 748.50,340.2 747.25,335.7 747.00,338.6 746.75,342.2 746.50,346.0 746.00,354.6 745.50,364.0 745.25,365.2 744.75,355.7 744.25,347.0 744.00,343.1 743.75,339.5 743.50,337.2 743.00,339.4 742.00,344.4 741.75,344.2 741.25,341.7 740.25,337.1 740.00,337.6 739.50,341.7 738.75,348.6 738.50,348.5 738.25,346.1 737.50,339.5 737.00,335.7 736.75,336.3 736.50,338.3 736.00,342.6 735.25,350.0 735.00,348.9 734.50,343.9 734.00,339.4 733.50,335.6 733.25,334.9 733.00,336.2 732.50,340.8 732.00,346.0 731.50,351.7 731.25,352.5 730.75,346.7 730.25,341.4 730.00,340.0 729.25,346.0 729.00,347.5 728.50,343.2 727.75,337.6 727.50,337.2 727.25,338.2 726.00,343.9 725.75,342.9 725.25,340.6 724.50,337.5 723.50,341.3 723.25,342.0 722.25,338.1 721.25,334.8 720.75,334.6 720.50,335.1 719.75,339.6 719.00,345.0 718.75,345.0 718.00,339.6 717.25,335.0 717.00,335.8 716.25,339.0 715.25,343.9 715.00,344.7 714.50,342.2 713.50,337.5 712.75,334.5 712.00,334.5 711.75,334.9 710.25,338.3 708.75,334.9 708.50,334.7 707.75,337.1 706.50,341.8 706.25,341.4 705.75,339.5 704.50,335.2 704.25,337.4 704.00,340.2 703.75,343.4 703.25,350.4 702.75,358.0 702.50,359.4 702.25,355.4 701.75,348.0 701.25,341.3 701.00,338.3 700.75,335.7 700.50,335.0 699.25,335.0 699.00,335.6 698.75,337.9 698.25,343.2 697.75,349.3 697.25,356.0 697.00,353.6 696.50,347.1 696.00,341.3 695.75,340.4 695.00,346.2 694.75,345.6 694.50,344.0 694.25,344.4 694.00,344.2 693.75,343.6 693.50,343.5 693.00,347.8 692.50,343.7 692.25,344.4 692.00,344.7 691.75,344.5 691.50,344.9 691.25,347.2 691.00,348.1 690.75,345.8 690.50,348.1 690.25,352.1 689.75,360.7 689.50,363.8 689.00,354.9 688.50,346.8 688.25,347.1 687.75,355.2 687.25,364.0 686.50,351.4 686.00,343.7 685.75,341.0 685.50,344.4 685.00,351.8 684.50,359.9 684.25,360.3 684.00,356.2 683.50,348.4 683.00,341.4 682.75,338.9 682.50,339.4 681.75,341.9 681.50,342.4 681.25,343.3 681.00,343.5 679.75,337.9 679.25,336.4 679.00,336.1 677.75,339.9 677.50,339.7 676.50,336.7 675.75,334.8 675.50,334.8 675.25,336.1 675.00,339.0 674.75,342.2 674.50,345.8 674.00,353.5 673.50,362.0 673.25,360.1 672.75,351.7 672.25,344.2 672.00,340.8 671.75,337.7 671.50,334.9 670.75,335.1 670.50,336.8 670.00,340.7 669.25,347.5 669.00,349.6 668.75,347.2 668.00,340.4 667.50,336.5 667.00,339.7 666.25,345.1 666.00,344.9 665.50,341.2 665.25,340.3 665.00,340.4 664.50,340.2 664.25,341.1 663.25,350.6 662.50,343.1 662.25,341.4 662.00,340.5 661.75,339.9 661.50,339.6 661.25,340.6 660.50,344.4 660.25,344.3 659.25,339.3 659.00,339.3 658.75,342.3 658.25,349.1 657.50,360.2 657.00,352.4 656.50,345.3 656.00,339.0 655.75,336.3 655.50,334.9 655.25,336.1 655.00,337.9 654.50,342.1 653.75,349.0 653.50,348.1 653.25,345.7 652.50,339.1 652.00,335.4 651.75,334.9 650.25,334.8 650.00,336.9 649.75,339.6 649.50,342.5 649.00,349.1 648.50,356.4 648.25,358.5 647.75,351.1 647.25,344.3 646.75,338.3 646.50,335.8 646.25,334.6 646.00,334.6 645.75,334.9 644.25,338.8 644.00,339.0 643.75,338.3 642.25,334.5 642.00,334.7 641.75,335.3 640.25,339.2 639.00,335.9 638.75,337.3 638.25,341.1 637.50,347.6 637.25,347.7 637.00,345.4 636.50,347.9 636.25,352.1 636.00,356.6 635.50,366.2 635.25,363.0 635.00,358.2 634.75,354.5 634.50,356.7 634.25,358.1 634.00,358.5 633.25,354.0 633.00,355.2 632.75,359.3 632.50,360.9 632.25,356.7 631.75,358.7 631.50,358.5 631.25,357.2 631.00,359.6 630.50,351.9 630.25,352.3 630.00,357.3 629.50,368.1 629.25,370.7 629.00,365.1 628.50,354.6 628.25,357.2 628.00,355.9 627.75,352.4 627.25,345.6 626.75,339.6 626.50,337.0 626.25,335.2 626.00,335.2 625.00,337.1 624.75,337.0 624.00,335.5 623.50,334.8 622.75,334.8 622.50,335.2 622.25,337.4 621.75,342.5 621.25,348.3 620.75,354.7 620.50,353.1 620.00,346.8 619.50,341.2 619.00,336.3 618.75,338.8 618.25,344.8 617.75,351.7 617.25,359.1 617.00,355.8 616.75,352.1 616.25,345.2 615.75,339.1 615.50,336.5 615.25,336.4 614.75,339.9 614.00,346.0 613.75,347.6 613.25,343.3 612.50,337.6 611.50,341.1 611.00,339.4 609.75,335.4 609.50,335.0 608.50,334.9 608.25,335.4 608.00,338.8 607.75,342.8 607.50,347.2 607.25,351.8 607.00,356.8 606.50,367.4 606.25,370.6 606.00,365.1 605.50,354.7 605.25,349.8 605.00,345.3 604.75,341.1 604.50,337.3 604.25,334.9 604.00,334.9 603.75,335.3 603.25,337.0 602.00,341.7 601.75,341.5 600.50,336.9 599.75,334.6 599.00,334.6 598.50,334.8 598.00,338.6 597.50,342.9 596.75,350.4 596.50,348.5 595.75,341.3 595.25,337.2 595.00,335.4 594.75,337.4 594.25,342.0 593.25,352.5 592.50,344.3 592.00,339.4 591.50,335.3 591.25,334.6 590.50,334.6 590.25,335.1 588.75,338.9 588.50,338.6 587.50,336.0 587.25,336.6 587.00,337.5 585.75,342.7 585.50,342.4 584.50,338.2 584.25,337.7 584.00,339.2 583.25,344.3 583.00,344.1 582.75,342.3 582.00,337.5 581.75,336.6 581.50,337.6 580.25,342.8 580.00,342.3 579.00,338.1 578.75,337.9 577.50,343.1 576.50,338.8 575.50,335.1 575.25,334.8 575.00,334.8 574.75,336.5 574.25,341.4 573.75,346.9 573.25,353.1 573.00,353.9 572.50,347.7 572.00,342.0 571.50,337.1 571.25,334.9 571.00,335.0 570.50,338.8 570.00,343.3 569.25,350.9 569.00,348.7 568.50,343.7 568.00,339.2 567.50,335.3 567.25,334.7 567.00,335.1 566.75,336.7 566.25,340.3 565.50,346.5 565.25,347.5 565.00,345.3 564.25,339.3 563.75,335.8 563.50,334.7 563.00,334.7 562.75,336.4 562.25,341.3 561.75,346.9 561.25,353.0 561.00,354.0 560.50,347.7 560.00,342.1 559.50,337.1 559.25,335.0 559.00,334.8 558.50,335.1 558.25,336.7 557.75,340.3 557.00,346.5 556.75,347.5 556.25,343.2 555.50,337.4 555.25,336.4 555.00,339.1 554.75,342.0 554.25,348.4 553.75,355.6 553.50,358.8 553.25,355.1 552.75,348.0 552.25,341.6 552.00,343.1 551.50,349.7 551.00,356.9 550.75,357.5 550.50,353.8 550.00,346.8 549.50,340.5 549.25,337.7 549.00,338.6 548.75,341.2 548.25,346.7 547.75,352.8 547.50,354.1 547.00,347.9 546.50,342.2 546.00,337.2 545.75,335.1 545.50,335.5 545.00,337.3 543.75,342.4 543.50,342.7 542.50,338.4 541.50,334.8 541.25,334.6 540.50,338.7 539.75,343.7 539.50,344.7 538.75,339.5 538.00,335.2 537.75,335.6 537.50,336.3 536.25,340.5 536.00,340.8 534.75,336.6 534.50,337.4 534.25,340.2 534.00,343.2 533.50,349.8 533.00,357.0 532.75,357.4 532.50,353.7 532.00,346.7 531.50,340.4 531.25,341.8 530.50,349.2 530.25,350.4 530.00,347.8 529.25,340.6 528.75,336.4 528.50,335.1 528.00,335.2 527.75,336.1 527.25,340.8 526.75,346.4 526.25,352.4 526.00,354.5 525.75,351.3 525.25,345.3 524.75,339.9 524.50,338.6 524.00,344.6 523.50,351.3 523.00,358.7 522.75,355.7 522.50,352.0 522.00,345.2 521.50,339.2 521.25,336.5 521.00,335.0 520.75,335.8 520.50,337.5 520.00,341.2 519.25,347.5 519.00,346.5 518.75,344.3 518.00,338.4 517.75,337.0 516.75,340.4 516.50,340.9 516.00,339.1 514.75,335.2 514.50,335.5 514.25,338.0 514.00,340.8 513.75,343.8 513.25,350.5 512.75,357.8 512.50,356.6 512.25,352.9 511.75,346.0 511.25,339.8 511.00,337.1 510.75,334.9 510.25,335.0 510.00,335.4 508.25,341.0 508.00,340.1 507.25,337.7 507.00,340.4 506.75,343.5 506.25,350.1 505.75,357.4 505.50,357.0 505.25,353.3 504.75,346.3 504.25,340.1 504.00,337.4 503.75,335.0 503.50,336.6 503.25,338.6 502.75,343.0 502.00,350.6 501.75,349.0 501.00,341.6 500.50,337.4 500.25,337.1 499.75,341.3 499.00,348.7 498.75,350.9 498.00,343.3 497.50,338.8 497.00,335.0 496.75,334.8 496.50,335.3 496.00,336.8 494.75,341.1 493.25,336.1 493.00,337.8 492.75,340.5 492.50,343.6 492.00,350.2 491.50,357.5 491.25,356.9 491.00,353.2 490.50,346.2 490.00,340.0 489.75,339.8 489.50,342.0 488.75,349.4 488.50,350.1 487.75,342.6 487.25,338.2 487.00,340.5 486.75,343.2 485.75,354.9 485.25,348.6 484.75,342.9 484.25,337.8 484.00,337.7 483.00,341.0 482.50,339.2 481.25,335.3 481.00,335.1 480.75,336.6 480.25,340.2 479.50,346.4 479.25,347.6 479.00,345.4 478.25,339.3 477.75,335.9 477.50,334.7 477.25,334.7 477.00,335.8 476.75,337.7 476.25,342.1 475.50,349.5 475.25,350.0 474.75,344.9 474.25,340.3 473.75,336.2 473.50,335.0 473.25,336.6 472.75,340.1 472.00,346.3 471.75,347.7 471.25,343.3 470.50,337.6 470.25,337.7 470.00,339.2 469.25,344.3 469.00,344.1 468.25,339.1 467.50,334.8 466.75,334.8 466.50,335.8 466.00,338.7 465.25,343.6 465.00,344.8 464.50,341.3 463.75,336.6 463.50,337.0 463.25,339.7 463.00,342.7 462.50,349.2 462.00,356.4 461.75,358.0 461.50,354.2 461.00,347.2 460.50,340.9 460.25,338.1 460.00,335.6 459.75,337.8 459.50,340.6 459.25,343.7 458.75,350.3 458.25,357.6 458.00,356.8 457.75,353.1 457.25,346.2 456.75,340.0 456.50,337.2 456.25,335.0 456.00,335.0 455.75,336.5 455.25,341.4 454.75,347.0 454.25,353.1 454.00,353.8 453.50,347.6 453.00,342.0 452.50,337.0 452.25,335.0 452.00,336.1 451.75,338.7 451.25,344.7 450.75,351.5 450.25,358.9 450.00,355.5 449.75,351.9 449.25,345.0 448.75,339.0 448.50,336.4 448.25,334.8 448.00,335.2 446.50,339.1 445.25,335.8 444.75,334.9 444.50,335.0 444.25,337.7 444.00,340.8 443.75,344.2 443.25,351.8 442.75,360.0 442.50,361.8 442.25,357.5 441.75,349.4 441.25,342.1 441.00,338.9 440.75,336.0 440.25,338.9 439.50,343.9 439.25,344.5 439.00,342.7 438.25,337.9 438.00,337.4 436.75,342.5 436.50,342.5 435.75,339.3 434.75,335.6 434.50,336.3 434.25,338.0 433.75,341.7 433.00,348.1 432.75,345.9 432.00,339.7 431.50,336.2 431.25,335.7 430.75,337.5 429.50,342.8 429.25,342.3 428.00,337.2 427.75,337.2 426.50,342.4 426.25,342.7 425.00,337.5 424.75,338.4 424.50,339.9 423.75,345.1 423.50,343.3 422.75,338.4 422.50,339.4 422.25,342.0 421.75,347.6 421.25,353.8 421.00,353.1 420.50,347.0 420.00,341.4 419.50,336.5 419.25,334.7 419.00,335.2 417.50,339.1 417.25,338.4 415.75,334.7 415.25,334.6 415.00,334.9 414.50,336.4 413.25,340.6 413.00,340.7 412.25,338.1 412.00,337.8 411.50,342.8 411.00,348.6 410.50,354.9 410.25,352.1 410.00,349.0 409.50,343.2 409.00,338.1 408.75,338.7 408.00,343.7 407.75,344.7 407.25,341.2 406.50,336.6 406.25,335.4 406.00,337.6 405.50,342.7 405.00,348.4 404.50,354.7 404.25,352.3 404.00,349.2 403.50,343.4 403.00,338.2 402.75,339.2 402.00,344.3 401.75,344.1 401.00,339.0 400.25,334.8 399.50,334.6 399.25,334.8 397.75,338.6 397.50,338.9 396.25,335.7 396.00,335.6 395.75,336.3 394.50,340.5 394.25,340.8 393.00,336.6 392.25,334.5 391.50,336.7 390.25,340.9 390.00,340.4 389.25,337.8 388.25,334.9 388.00,337.0 387.50,341.9 387.00,347.6 386.50,353.7 386.25,353.2 385.75,347.1 385.25,341.5 384.75,336.6 384.50,334.8 384.00,334.8 383.75,335.1 383.25,339.0 382.75,343.5 382.00,351.1 381.25,343.5 380.75,339.0 380.50,337.1 380.00,339.3 379.00,344.2 378.75,344.4 378.50,343.1 377.50,338.3 377.00,336.4 375.75,340.6 375.50,340.8 375.00,339.0 373.75,335.1 373.50,336.5 373.25,339.3 373.00,342.3 372.50,349.0 371.75,360.2 371.50,356.3 371.00,348.8 370.75,349.0 370.25,352.7 370.00,354.0 369.75,354.4 369.50,353.9 369.25,352.5 369.00,351.8 368.50,359.3 368.00,351.9 367.75,349.9 367.50,350.2 367.25,349.7 367.00,352.2 366.75,350.2 366.50,347.4 366.00,342.3 365.50,337.6 365.25,338.1 365.00,339.8 364.25,345.6 364.00,346.2 363.75,344.2 363.00,338.6 362.50,335.4 362.25,334.8 362.00,334.7 361.50,337.9 361.00,341.6 360.25,347.9 359.75,343.6 359.00,337.9 358.50,334.7 357.75,337.0 356.50,341.8 356.25,341.4 355.00,336.8 354.75,337.4 354.50,339.0 353.75,344.3 353.50,345.7 353.00,341.9 352.75,342.3 352.50,343.4 352.25,345.0 351.75,348.5 351.50,349.0 351.25,349.0 351.00,348.3 350.75,347.2 350.50,346.5 350.25,349.0 350.00,349.9 349.75,347.3 349.50,346.4 349.25,346.8 349.00,348.8 348.75,352.7 348.25,360.8 348.00,359.4 347.50,351.3 347.00,344.0 346.75,340.7 346.50,337.6 346.25,335.7 345.00,339.0 344.75,338.8 343.50,335.5 343.25,336.9 342.75,341.7 342.25,347.2 341.75,353.3 341.50,352.7 341.00,346.7 340.50,341.2 340.00,336.5 339.75,335.0 339.50,335.0 339.25,336.1 339.00,338.1 338.50,342.6 337.75,350.3 337.50,350.4 336.75,342.7 336.25,338.2 336.00,339.4 335.75,343.3 335.50,347.6 335.25,352.1 335.00,356.9 334.50,367.2 334.25,368.0 334.00,362.7 333.50,352.7 333.25,348.2 333.00,343.9 332.75,339.9 332.50,337.6 331.50,341.1 330.25,336.9 330.00,336.8 328.75,341.5 328.50,341.7 327.50,337.9 326.50,334.6 326.25,334.4 325.00,334.4 324.50,334.6 323.00,337.9 322.75,338.0 321.25,334.7 321.00,334.5 320.75,335.3 320.50,337.2 320.00,341.6 319.00,351.5 318.25,343.7 317.75,339.1 317.25,335.1 317.00,335.0 316.50,335.1 316.25,337.4 316.00,340.1 315.75,343.1 315.25,349.8 314.75,357.1 314.50,357.8 314.25,354.0 313.75,347.0 313.25,340.6 313.00,339.5 312.75,343.6 312.50,348.0 312.25,352.8 312.00,357.9 311.50,368.7 311.25,370.1 311.00,364.5 310.50,354.1 310.25,349.2 310.00,344.7 309.75,340.5 309.50,339.8 309.25,341.9 308.50,348.5 308.25,346.8 308.00,344.6 307.25,338.4 307.00,339.4 306.75,342.2 306.25,348.4 305.75,355.2 305.50,356.2 305.00,349.3 304.50,343.1 304.00,337.6 303.75,335.2 303.50,335.1 303.25,336.4 303.00,338.2 302.50,342.2 301.75,348.8 301.50,346.5 300.75,340.1 300.25,336.4 300.00,337.1 299.75,340.0 299.50,343.2 299.00,350.3 298.50,358.0 298.25,360.4 298.00,356.4 297.50,348.7 297.00,341.9 296.75,338.8 296.50,336.7 296.00,340.5 295.25,347.0 295.00,348.4 294.50,343.9 293.75,337.8 293.50,337.2 293.25,340.2 293.00,343.5 292.50,350.9 292.00,359.0 291.75,362.0 291.50,357.7 291.00,349.7 290.50,342.5 290.25,339.2 290.00,336.3 289.75,335.0 289.25,335.0 289.00,335.6 288.75,337.3 288.25,341.1 287.50,347.7 287.25,347.6 287.00,345.4 286.25,339.1 286.00,338.8 285.75,340.7 285.00,346.8 284.75,346.7 284.50,344.6 283.75,338.7 283.25,335.4 283.00,335.6 281.75,338.9 281.50,338.9 280.25,335.6 279.75,334.6 279.50,334.6 279.25,334.8 279.00,336.9 278.50,341.6 278.00,347.0 277.50,353.0 277.25,352.3 276.75,346.4 276.25,341.0 275.75,336.4 275.50,334.7 274.00,334.9 273.75,335.2 273.50,336.9 273.00,340.8 272.25,347.7 272.00,349.4 271.25,342.4 271.00,342.0 270.25,349.3 270.00,349.5 269.25,342.2 268.75,337.9 268.25,343.1 267.75,349.0 267.25,355.4 266.50,346.2 266.00,340.6 265.50,335.9 265.25,334.8 263.50,334.7 263.25,335.1 262.25,339.3 261.25,344.2 261.00,344.5 260.50,341.9 259.50,337.2 258.75,334.4 257.25,334.5 255.75,337.3 254.25,334.5 252.75,334.7 252.50,335.6 252.00,338.8 251.75,340.8 251.50,342.4 251.00,346.4 250.75,345.4 250.50,345.1 250.25,346.5 249.75,349.9 249.50,353.0 249.25,352.3 249.00,349.4 248.50,346.0 248.00,348.3 247.75,346.0 247.00,339.6 246.50,336.0 246.25,338.8 246.00,342.4 245.75,346.2 245.25,354.8 244.75,364.2 244.50,364.9 244.00,355.4 243.50,346.8 243.25,342.9 243.00,339.3 242.75,336.1 242.50,334.8 242.00,334.8 241.75,335.2 240.50,338.0 240.25,337.9 238.75,334.6 238.50,334.6 238.25,335.0 238.00,336.5 237.50,340.0 236.75,346.1 236.50,347.4 236.25,345.2 235.50,339.3 235.00,335.9 234.75,336.1 234.50,338.2 234.00,342.9 233.25,350.9 233.00,351.5 232.50,346.0 232.00,340.9 231.50,336.5 231.25,334.7 230.75,334.7 230.50,335.4 229.75,338.3 228.50,344.0 227.50,339.4 226.50,335.4 226.25,336.7 226.00,339.8 225.75,343.2 225.50,347.0 225.00,355.1 224.50,364.0 224.25,360.5 223.75,351.9 223.25,344.1 223.00,340.6 222.75,337.4 222.50,335.0 222.25,335.4 221.50,338.3 220.25,344.0 220.00,342.8 218.75,337.3 218.50,337.9 218.00,343.1 217.50,349.0 217.00,355.4 216.25,346.2 215.75,340.6 215.25,335.8 215.00,334.7 214.25,334.8 214.00,336.2 213.50,339.3 212.75,344.6 212.50,345.3 211.75,339.9 211.00,335.3 210.75,334.5 209.50,334.6 209.25,335.9 208.75,339.0 208.00,344.3 207.75,345.7 207.00,340.2 206.25,335.5 206.00,334.5 205.75,334.6 205.50,335.2 204.00,339.1 203.75,338.7 202.75,336.0 202.50,336.7 201.25,341.4 201.00,341.8 200.00,338.0 199.00,334.7 198.75,334.9 197.25,338.2 196.50,336.5 195.50,334.5 195.00,334.5 194.75,335.5 194.25,339.8 193.75,344.8 193.25,350.3 193.00,352.9 192.25,344.5 191.75,339.5 191.25,335.3 191.00,334.6 190.00,334.7 188.75,337.0 188.50,337.1 188.00,336.1 187.75,336.7 186.50,341.3 186.25,341.9 186.00,340.9 185.75,340.5 185.25,340.6 185.00,341.4 184.50,345.1 184.25,344.9 184.00,344.5 183.75,344.4 183.50,343.8 183.25,342.9 182.75,341.1 182.50,340.8 181.75,340.8 181.50,341.7 181.00,345.4 180.75,344.5 180.00,339.2 179.75,340.0 179.50,342.2 178.75,349.5 178.50,349.4 177.75,342.1 177.25,337.8 177.00,337.6 176.75,341.7 176.50,346.3 176.25,351.3 176.00,356.6 175.75,362.3 175.25,374.3 175.00,371.6 174.75,365.6 174.50,359.8 174.25,354.3 174.00,349.1 173.75,344.2 173.50,339.8 173.25,336.0 173.00,335.0 172.00,335.0 170.50,338.9 170.25,338.9 169.25,336.2 168.50,334.5 168.25,334.5 168.00,334.8 167.75,336.8 167.25,341.5 166.75,346.8 166.25,352.6 166.00,351.6 165.50,345.9 165.00,340.7 164.50,336.2 164.25,334.7 164.00,334.8 163.50,335.0 163.00,338.6 162.50,342.7 161.75,349.7 161.00,342.7 160.50,338.5 160.25,337.4 159.00,342.5 158.75,342.5 158.50,341.4 158.25,341.0 158.00,342.0 157.75,342.4 157.50,342.3 157.25,342.6 157.00,343.8 156.75,343.0 155.75,338.5 155.50,338.6 155.25,340.3 154.50,345.7 154.25,344.2 153.75,340.6 153.00,335.9 152.75,334.6 152.50,334.6 152.25,334.9 151.50,337.4 150.25,342.1 149.50,339.1 148.75,336.6 148.25,338.8 147.00,345.0 146.25,341.2 145.25,336.6 145.00,336.2 143.75,340.4 143.50,341.0 142.75,338.4 142.00,336.1 141.75,337.0 140.50,342.1 140.25,342.9 139.25,338.7 138.25,335.0 138.00,335.6 137.75,337.2 137.25,340.6 136.50,346.5 136.25,345.3 136.00,343.3 135.25,337.9 134.75,334.8 134.50,334.6 133.50,334.6 133.25,335.9 133.00,337.8 132.50,341.8 131.75,348.8 131.50,348.3 130.75,341.4 130.25,337.4 130.00,335.8 129.50,337.6 128.25,342.8 128.00,342.2 127.25,339.0 126.25,335.3 126.00,336.9 125.50,342.1 125.00,348.1 124.50,354.6 124.25,355.0 123.75,348.4 123.25,342.4 122.75,337.2 122.50,334.9 122.25,335.1 120.50,340.1 120.00,338.5 118.75,335.0 118.50,334.8 118.00,338.7 117.50,343.3 116.75,351.0 116.50,349.6 116.00,344.4 115.50,339.7 115.00,335.6 114.75,335.5 114.00,336.9 113.75,337.2 112.50,334.8 112.25,334.9 112.00,337.3 111.75,340.0 111.50,343.0 111.00,349.5 110.50,356.7 110.25,357.1 110.00,353.4 109.50,346.5 109.00,340.4 108.75,337.6 108.50,335.5 107.25,338.8 107.00,338.9 106.00,336.3 105.75,336.9 105.50,339.0 105.00,343.6 104.25,351.4 104.00,349.3 103.50,344.1 103.00,339.4 102.50,335.4 102.25,336.8 101.75,340.7 101.00,347.5 100.75,349.6 100.00,342.5 99.50,338.4 99.00,334.8 98.75,334.6 98.25,334.5 97.75,334.7 96.25,338.1 96.00,337.9 94.75,335.1 94.50,335.3 94.00,336.8 92.75,341.0 92.50,340.4 91.75,337.8 91.50,337.9 90.50,341.8 90.25,341.4 89.25,337.6 88.25,334.5 87.50,334.5 86.00,337.3 84.50,334.5 84.25,335.7 83.50,340.4 82.75,345.9 82.00,340.5 81.25,335.8 81.00,334.6 80.25,334.6 80.00,335.3 79.75,337.0 79.25,340.8 78.50,347.3 78.25,348.1 78.00,345.8 77.25,339.5 76.75,335.9 76.50,336.6 76.00,340.2 75.25,346.3 75.00,347.2 74.75,345.1 74.00,339.1 73.50,335.7 73.25,334.5 72.50,334.4 71.75,335.2 71.50,335.3 70.75,334.4 68.50,334.3 68.25,334.7 67.50,336.9 66.25,341.2 65.50,338.5 64.25,334.7 64.00,334.4 63.25,334.5 62.00,336.3 60.75,334.4 60.50,334.5 60.25,335.4 59.50,338.5 58.25,344.7 58.00,344.0 57.50,341.4 56.50,336.9 56.25,336.1 55.50,337.8 55.25,338.1 54.25,335.8 54.00,336.1 53.75,336.9 52.50,341.3 52.25,340.8 52.00,339.9 50.75,335.7 50.50,335.5 49.75,336.9 49.50,337.2 48.00,334.4 46.25,334.2 44.75,336.3 43.75,334.8 43.25,334.3 42.00,334.4 41.50,335.6 40.00,340.1 39.50,338.7 38.25,335.1 38.00,335.5 37.50,337.2 36.25,342.2 36.00,342.1 35.00,338.1 34.00,334.6 33.75,334.4 33.50,334.5 32.25,336.3 31.25,334.7 31.00,335.1 29.50,339.0 29.25,338.7 29.00,338.0 27.50,334.3 27.25,334.2 16.00,334.0"/>
</g>
<rect x="16" y="277" width="844" height="1" fill="#e6e6e6"/>
<text x="24" y="185" font-family="Liberation Sans, sans-serif" font-size="12" fill="#ececec">Channel 0</text>
<text x="24" y="294.4" font-family="Liberation Sans, sans-serif" font-size="12" fill="#ececec">Channel 1</text>
<rect x="254" y="168" width="283.6" height="219" fill="#fff" fill-opacity="0.4"/>
<path d="M253.5 168 V387" stroke="#e6e04a" stroke-width="1.2" stroke-dasharray="3 2" fill="none"/>
</svg>
<div class="abs" style="left:16px;top:403px;width:844px;height:12px;box-sizing:border-box;border:1px solid #bdbdbd;background:#e6e6e6"></div>
<div class="abs" style="left:23px;top:441px;width:840px;height:67px;box-sizing:border-box;border:1px solid #dcdcdc"></div>
<div class="abs song lbl" style="left:29px;top:434px;padding:0 2px;background:#f0f0f0">选择区域</div>
<div class="abs song lbl" style="left:41px;top:457px">开始位置</div>
<div class="abs song lbl" style="left:41px;top:483px">播放位置</div>
<div class="abs song lbl" style="left:290.5px;top:457px">结束位置</div>
<div class="abs song lbl" style="left:541px;top:457px">持续长度</div>
<div class="abs inp" style="left:102px;top:454px"><span>50.<i></i>000</span></div>
<div class="abs inp" style="left:102px;top:480px;border-color:#0078d7"><span>50.<i></i>000</span></div>
<div class="abs inp" style="left:351px;top:454px"><span>110.<i></i>000</span></div>
<div class="abs inp" style="left:602px;top:454px"><span>60.<i></i>000</span></div>
<div class="abs song lbl" style="left:206.5px;top:457px">秒</div>
<div class="abs song lbl" style="left:206.5px;top:483px">秒</div>
<div class="abs song lbl" style="left:455.5px;top:457px">秒</div>
<div class="abs song lbl" style="left:706.5px;top:457px">秒</div>
<div class="abs" style="left:6px;top:531px;width:884px;height:1px;background:#d9d9d9"></div>
<svg class="abs" style="left:870px;top:535px" width="20" height="18" viewBox="870 535 20 18"><rect x="886" y="541" width="2" height="2" fill="#fff"/><rect x="885" y="540" width="2" height="2" fill="#8a8a8a"/><rect x="882" y="545" width="2" height="2" fill="#fff"/><rect x="881" y="544" width="2" height="2" fill="#8a8a8a"/><rect x="886" y="545" width="2" height="2" fill="#fff"/><rect x="885" y="544" width="2" height="2" fill="#8a8a8a"/><rect x="878" y="549" width="2" height="2" fill="#fff"/><rect x="877" y="548" width="2" height="2" fill="#8a8a8a"/><rect x="882" y="549" width="2" height="2" fill="#fff"/><rect x="881" y="548" width="2" height="2" fill="#8a8a8a"/><rect x="886" y="549" width="2" height="2" fill="#fff"/><rect x="885" y="548" width="2" height="2" fill="#8a8a8a"/></svg>
<div id="menu" class="abs"><div class="abs gut"></div><div class="abs hl"></div>
<div class="abs it" style="top:1px">剪切</div>
<div class="abs it" style="top:23px">复制</div>
<div class="abs it" style="top:45px;color:#9a9a9a">粘贴</div>
<div class="abs it" style="top:67px">从文件中粘贴</div>
<div class="abs it" style="top:89px">插入云端音效库中的音效</div>
<div class="abs it" style="top:111px">从文件中混音</div>
<div class="abs it" style="top:133px">从云端配乐库中混音</div>
</div>
<svg class="abs" style="left:770px;top:500px" width="126" height="63" viewBox="770 500 126 63">
<g fill="#9c9c9c" fill-opacity="0.62">
<path d="M786 511 L794 513 L799 520 L799.5 532 L795 540 L786 540.5 L781 534 L780 524 L782 515 Z"/>
<path d="M809 513 L816 511.5 L822 514 L826 521 L826 533 L821 540 L811 541 L805.5 534 L804.5 523 Z"/>
<path d="M834 513 L848 510 L856 513 L859 521 L860 533 L856 540 L845 542.5 L832 540 L829.5 530 L830 518 Z"/>
<path d="M866 516 L878 513 L890 514 L895 520 L895.5 534 L889 541 L876 542 L866 538 L862.5 528 Z"/>
</g>
<g fill="#f4f4f4" font-family="'Liberation Sans','Noto Sans CJK SC',sans-serif" font-weight="500">
<text x="783" y="536" font-size="25" font-style="italic" font-weight="normal">K</text>
<text x="807" y="536" font-size="25" font-style="italic" font-weight="normal">K</text>
<text x="832" y="536" font-size="25">下</text>
<text x="864" y="537" font-size="25">载</text>
</g>
<text x="782" y="560" font-family="Liberation Sans, sans-serif" font-weight="bold" font-size="10.5" textLength="85" lengthAdjust="spacingAndGlyphs" fill="#a8a8a8" fill-opacity="0.85">www.kkx.net</text>
</svg>
</body></html>
